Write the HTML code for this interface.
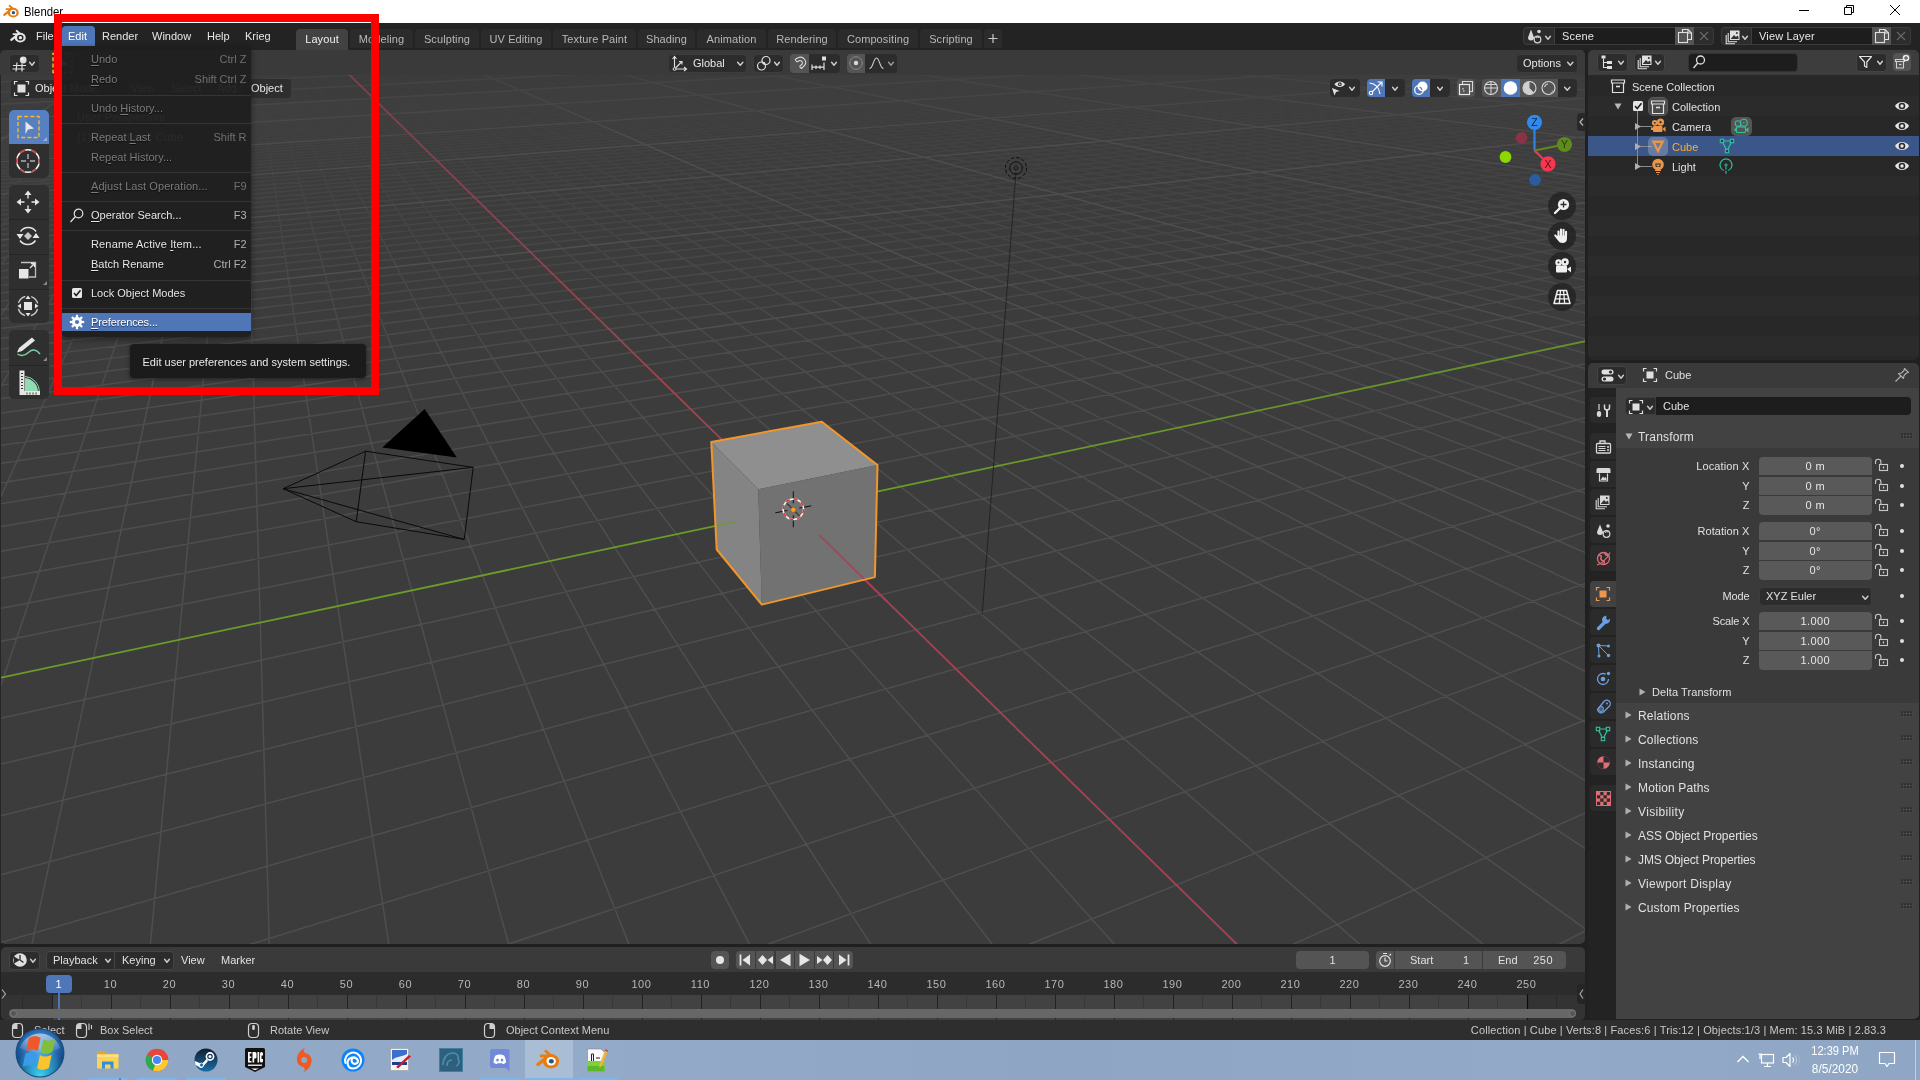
<!DOCTYPE html>
<html><head><meta charset="utf-8"><title>Blender</title>
<style>
html,body{margin:0;padding:0;width:1920px;height:1080px;overflow:hidden;background:#202020;font-family:"Liberation Sans", sans-serif;}
.a{position:absolute;box-sizing:border-box;}
.t{white-space:nowrap;overflow:visible;}
svg{overflow:visible;}
</style></head><body><div id="root" class="a" style="left:0;top:0;width:1920px;height:1080px;will-change:transform;">
<div class="a" style="left:0px;top:0px;width:1920px;height:23px;background:#ffffff;"></div>
<svg class="a" style="left:3px;top:3px;" width="17" height="17" viewBox="0 0 16 16"><g fill="none" stroke="#e87d0d" stroke-linecap="round">
<path d="M1.2 11.2L8.2 5.6" stroke-width="2.1"/>
<path d="M3.2 5.7H8.6" stroke-width="1.7"/>
<path d="M6.2 2.6L9.4 5.4" stroke-width="1.7"/>
</g>
<ellipse cx="9.6" cy="9.1" rx="5.2" ry="4.6" fill="#e87d0d"/>
<ellipse cx="9.7" cy="9.1" rx="3.0" ry="2.7" fill="#fff"/>
<ellipse cx="9.8" cy="9.1" rx="1.6" ry="1.5" fill="#265787"/></svg>
<div class="a t" style="left:23.5px;top:3.5px;height:16px;line-height:16px;font-size:12px;color:#000;transform:scaleX(.945);transform-origin:0 50%;">Blender</div>
<svg class="a" style="left:1790px;top:0px;" width="130" height="23" viewBox="0 0 130 23"><g stroke="#000" stroke-width="1" fill="none">
<path d="M9 10.5H19"/>
<path d="M54.5 7.5H61.5V14.5H54.5Z M56.5 7.5V5.5H63.5V12.5H61.5"/>
<path d="M100 5L110 15M110 5L100 15"/></g></svg>
<div class="a" style="left:0px;top:23px;width:1920px;height:27px;background:#232323;"></div>
<svg class="a" style="left:10px;top:28px;" width="17" height="17" viewBox="0 0 16 16"><g fill="none" stroke="#e6e6e6" stroke-linecap="round">
<path d="M1.2 11.2L8.2 5.6" stroke-width="2.1"/>
<path d="M3.2 5.7H8.6" stroke-width="1.7"/>
<path d="M6.2 2.6L9.4 5.4" stroke-width="1.7"/>
</g>
<ellipse cx="9.6" cy="9.1" rx="5.2" ry="4.6" fill="#e6e6e6"/>
<ellipse cx="9.7" cy="9.1" rx="3.0" ry="2.7" fill="#232323"/>
<ellipse cx="9.8" cy="9.1" rx="1.6" ry="1.5" fill="#e6e6e6"/></svg>
<div class="a t" style="left:36px;top:27px;height:18px;line-height:18px;font-size:11px;color:#e6e6e6;">File</div>
<div class="a" style="left:62px;top:26px;width:33px;height:19.5px;background:#4f77b8;border-radius:4px 4px 0 0;"></div>
<div class="a t" style="left:68px;top:27px;height:18px;line-height:18px;font-size:11px;color:#fff;">Edit</div>
<div class="a t" style="left:102px;top:27px;height:18px;line-height:18px;font-size:11px;color:#e6e6e6;">Render</div>
<div class="a t" style="left:152px;top:27px;height:18px;line-height:18px;font-size:11px;color:#e6e6e6;">Window</div>
<div class="a t" style="left:207px;top:27px;height:18px;line-height:18px;font-size:11px;color:#e6e6e6;">Help</div>
<div class="a t" style="left:245px;top:27px;height:18px;line-height:18px;font-size:11px;color:#e6e6e6;">Krieg</div>
<div class="a" style="left:296px;top:29px;width:52px;height:21px;background:#424242;border-radius:4px 4px 0 0;"></div>
<div class="a t" style="left:296px;top:30px;width:52px;height:19px;line-height:19px;font-size:11px;color:#f0f0f0;text-align:center;letter-spacing:0.1px;">Layout</div>
<div class="a" style="left:350px;top:29px;width:63px;height:19px;background:#2b2b2b;border-radius:4px 4px 0 0;"></div>
<div class="a t" style="left:350px;top:30px;width:63px;height:19px;line-height:19px;font-size:11px;color:#b8b8b8;text-align:center;letter-spacing:0.1px;">Modeling</div>
<div class="a" style="left:415px;top:29px;width:64px;height:19px;background:#2b2b2b;border-radius:4px 4px 0 0;"></div>
<div class="a t" style="left:415px;top:30px;width:64px;height:19px;line-height:19px;font-size:11px;color:#b8b8b8;text-align:center;letter-spacing:0.1px;">Sculpting</div>
<div class="a" style="left:481px;top:29px;width:70px;height:19px;background:#2b2b2b;border-radius:4px 4px 0 0;"></div>
<div class="a t" style="left:481px;top:30px;width:70px;height:19px;line-height:19px;font-size:11px;color:#b8b8b8;text-align:center;letter-spacing:0.1px;">UV Editing</div>
<div class="a" style="left:553px;top:29px;width:83px;height:19px;background:#2b2b2b;border-radius:4px 4px 0 0;"></div>
<div class="a t" style="left:553px;top:30px;width:83px;height:19px;line-height:19px;font-size:11px;color:#b8b8b8;text-align:center;letter-spacing:0.1px;">Texture Paint</div>
<div class="a" style="left:638px;top:29px;width:57px;height:19px;background:#2b2b2b;border-radius:4px 4px 0 0;"></div>
<div class="a t" style="left:638px;top:30px;width:57px;height:19px;line-height:19px;font-size:11px;color:#b8b8b8;text-align:center;letter-spacing:0.1px;">Shading</div>
<div class="a" style="left:697px;top:29px;width:69px;height:19px;background:#2b2b2b;border-radius:4px 4px 0 0;"></div>
<div class="a t" style="left:697px;top:30px;width:69px;height:19px;line-height:19px;font-size:11px;color:#b8b8b8;text-align:center;letter-spacing:0.1px;">Animation</div>
<div class="a" style="left:768px;top:29px;width:68px;height:19px;background:#2b2b2b;border-radius:4px 4px 0 0;"></div>
<div class="a t" style="left:768px;top:30px;width:68px;height:19px;line-height:19px;font-size:11px;color:#b8b8b8;text-align:center;letter-spacing:0.1px;">Rendering</div>
<div class="a" style="left:838px;top:29px;width:80px;height:19px;background:#2b2b2b;border-radius:4px 4px 0 0;"></div>
<div class="a t" style="left:838px;top:30px;width:80px;height:19px;line-height:19px;font-size:11px;color:#b8b8b8;text-align:center;letter-spacing:0.1px;">Compositing</div>
<div class="a" style="left:920px;top:29px;width:62px;height:19px;background:#2b2b2b;border-radius:4px 4px 0 0;"></div>
<div class="a t" style="left:920px;top:30px;width:62px;height:19px;line-height:19px;font-size:11px;color:#b8b8b8;text-align:center;letter-spacing:0.1px;">Scripting</div>
<div class="a" style="left:984px;top:29px;width:18px;height:19px;background:#2b2b2b;border-radius:4px 4px 0 0;"></div>
<svg class="a" style="left:984px;top:29px;" width="18" height="19" viewBox="0 0 18 19"><path d="M9 5V14M4.5 9.5H13.5" stroke="#c8c8c8" stroke-width="1.2" fill="none"/></svg>
<div class="a" style="left:1523px;top:27px;width:191px;height:18px;background:#1d1d1d;border-radius:4px;border:1px solid #3a3a3a;"></div>
<div class="a" style="left:1523px;top:27px;width:31.5px;height:18px;background:#2c2c2c;border-radius:4px 0 0 4px;border:1px solid #3d3d3d;"></div>
<div class="a" style="left:1674.5px;top:27px;width:19.5px;height:18px;background:#545454;"></div>
<div class="a" style="left:1694px;top:27px;width:20px;height:18px;background:#2c2c2c;border-radius:0 4px 4px 0;border:1px solid #3a3a3a;border-left:none;"></div>
<div class="a t" style="left:1562.0px;top:27px;height:18px;line-height:18px;font-size:11px;color:#e6e6e6;letter-spacing:0.15px;">Scene</div>
<svg class="a" style="left:1543.5px;top:34.5px;" width="8" height="5.5" viewBox="0 0 8 5.5"><path d="M1.600 1.200L4.0 4.3L6.4 1.200" fill="none" stroke="#d0d0d0" stroke-width="1.4" stroke-linecap="round" stroke-linejoin="round"/></svg>
<svg class="a" style="left:1676.5px;top:28px;" width="16" height="16" viewBox="0 0 16 16"><path d="M5.500 4.500V1.500H11L14.500 5V11.500H11" fill="none" stroke="#e0e0e0" stroke-width="1.100"/><path d="M11 1.500V5H14.500" fill="none" stroke="#e0e0e0" stroke-width="1"/><rect x="1.500" y="4.500" width="9" height="10" fill="none" stroke="#e0e0e0" stroke-width="1.100"/></svg>
<svg class="a" style="left:1696px;top:28px;" width="16" height="16" viewBox="0 0 16 16"><path d="M4 4L12 12M12 4L4 12" stroke="#6a6a6a" stroke-width="1.100"/></svg>
<svg class="a" style="left:1526px;top:28px;" width="17" height="17" viewBox="0 0 17 17"><path d="M5 1.500L8 9.500A3 3 0 1 1 2 9.500Z" fill="#d8d8d8"/><circle cx="13" cy="3.500" r="1.800" fill="#d8d8d8"/><circle cx="11.500" cy="11.500" r="3.300" fill="none" stroke="#d8d8d8" stroke-width="1.200"/><path d="M10 10A2.500 2.500 0 0 1 13 9.500" fill="none" stroke="#d8d8d8" stroke-width="1"/></svg>
<div class="a" style="left:1720.5px;top:27px;width:190.5px;height:18px;background:#1d1d1d;border-radius:4px;border:1px solid #3a3a3a;"></div>
<div class="a" style="left:1720.5px;top:27px;width:31.0px;height:18px;background:#2c2c2c;border-radius:4px 0 0 4px;border:1px solid #3d3d3d;"></div>
<div class="a" style="left:1871.5px;top:27px;width:19.5px;height:18px;background:#545454;"></div>
<div class="a" style="left:1891px;top:27px;width:20px;height:18px;background:#2c2c2c;border-radius:0 4px 4px 0;border:1px solid #3a3a3a;border-left:none;"></div>
<div class="a t" style="left:1759.0px;top:27px;height:18px;line-height:18px;font-size:11px;color:#e6e6e6;letter-spacing:0.15px;">View Layer</div>
<svg class="a" style="left:1740.5px;top:34.5px;" width="8" height="5.5" viewBox="0 0 8 5.5"><path d="M1.600 1.200L4.0 4.3L6.4 1.200" fill="none" stroke="#d0d0d0" stroke-width="1.4" stroke-linecap="round" stroke-linejoin="round"/></svg>
<svg class="a" style="left:1873.5px;top:28px;" width="16" height="16" viewBox="0 0 16 16"><path d="M5.500 4.500V1.500H11L14.500 5V11.500H11" fill="none" stroke="#e0e0e0" stroke-width="1.100"/><path d="M11 1.500V5H14.500" fill="none" stroke="#e0e0e0" stroke-width="1"/><rect x="1.500" y="4.500" width="9" height="10" fill="none" stroke="#e0e0e0" stroke-width="1.100"/></svg>
<svg class="a" style="left:1893px;top:28px;" width="16" height="16" viewBox="0 0 16 16"><path d="M4 4L12 12M12 4L4 12" stroke="#6a6a6a" stroke-width="1.100"/></svg>
<svg class="a" style="left:1724.5px;top:28.5px;" width="16" height="16" viewBox="0 0 16 16"><rect x="5" y="1.500" width="9.500" height="9.500" fill="#e0e0e0"/><path d="M6 9.500L9 6L11 8L12.500 6.500L13.500 8V10H6Z" fill="#333"/><circle cx="11.800" cy="4" r="1" fill="#333"/><path d="M3.200 4V12.800H12M1.200 6V14.800H10" fill="none" stroke="#e0e0e0" stroke-width="1.100"/></svg>
<div class="a" style="left:0px;top:50px;width:1585px;height:894px;background:#3c3c3c;border-radius:5px;overflow:hidden;"><svg class="a" style="left:0;top:0" width="1585" height="894" viewBox="0 0 1585 894"><defs><linearGradient id="gf" gradientUnits="userSpaceOnUse" x1="0" y1="0" x2="0" y2="894"><stop offset="0.028" stop-color="#4e4e4e" stop-opacity="0.05"/><stop offset="0.08" stop-color="#4e4e4e" stop-opacity="0.2"/><stop offset="0.145" stop-color="#4e4e4e" stop-opacity="0.38"/><stop offset="0.22" stop-color="#4e4e4e" stop-opacity="0.6"/><stop offset="0.36" stop-color="#4e4e4e" stop-opacity="0.86"/><stop offset="0.5" stop-color="#4e4e4e" stop-opacity="1"/></linearGradient><linearGradient id="gc" gradientUnits="userSpaceOnUse" x1="0" y1="0" x2="0" y2="894"><stop offset="0.028" stop-color="#505050" stop-opacity="0.32"/><stop offset="0.11" stop-color="#505050" stop-opacity="0.8"/><stop offset="0.22" stop-color="#4f4f4f" stop-opacity="1"/><stop offset="1" stop-color="#4e4e4e" stop-opacity="1"/></linearGradient><linearGradient id="gx" gradientUnits="userSpaceOnUse" x1="0" y1="0" x2="0" y2="894"><stop offset="0.02" stop-color="#a54251" stop-opacity="0.6"/><stop offset="0.4" stop-color="#a54251" stop-opacity="1"/></linearGradient><linearGradient id="gy" gradientUnits="userSpaceOnUse" x1="0" y1="0" x2="0" y2="894"><stop offset="0.3" stop-color="#6c9c28" stop-opacity="0.85"/><stop offset="0.5" stop-color="#6c9c28" stop-opacity="1"/></linearGradient></defs><path d="M-5.0 71.0L1346.4 -5.0M-5.0 72.8L1365.2 -5.0M-5.0 74.5L1384.1 -5.0M-5.0 76.3L1403.1 -5.0M-5.0 78.2L1422.3 -5.0M-5.0 80.0L1441.5 -5.0M-5.0 82.0L1460.9 -5.0M-5.0 83.9L1480.4 -5.0M-5.0 86.0L1500.0 -5.0M-5.0 90.2L1539.6 -5.0M-5.0 92.4L1559.6 -5.0M-5.0 94.6L1579.7 -5.0M-5.0 96.9L1590.0 -4.4M-5.0 99.3L1590.0 -3.1M-5.0 101.7L1590.0 -1.7M-5.0 104.3L1590.0 -0.3M-5.0 106.8L1590.0 1.1M-5.0 109.5L1590.0 2.6M-5.0 115.0L1590.0 5.6M-5.0 117.9L1590.0 7.2M-5.0 120.9L1590.0 8.9M-5.0 124.0L1590.0 10.6M-5.0 127.2L1590.0 12.4M-5.0 130.4L1590.0 14.2M-5.0 133.8L1590.0 16.0M-5.0 137.3L1590.0 18.0M-5.0 140.9L1590.0 20.0M-5.0 148.5L1590.0 24.2M-5.0 152.5L1590.0 26.4M-5.0 156.7L1590.0 28.7M-5.0 161.0L1590.0 31.1M-5.0 165.4L1590.0 33.6M-5.0 170.1L1590.0 36.1M-5.0 174.9L1590.0 38.8M-5.0 179.9L1590.0 41.6M-5.0 185.1L1590.0 44.4M-5.0 196.2L1590.0 50.6M5.5 16.0L-5.0 20.3M-5.0 202.1L1590.0 53.8M17.6 15.5L-5.0 25.2M-5.0 208.3L1590.0 57.3M29.7 15.0L-5.0 30.7M-5.0 214.7L1590.0 60.8M41.7 14.6L-5.0 36.7M-5.0 221.4L1590.0 64.6M53.6 14.1L-5.0 43.5M-5.0 228.5L1590.0 68.5M65.4 13.6L-5.0 51.2M-5.0 235.9L1590.0 72.6M77.1 13.1L-5.0 59.8M-5.0 243.6L1590.0 76.8M88.8 12.6L-5.0 69.8M-5.0 251.8L1590.0 81.4M100.4 12.1L-5.0 81.3M-5.0 269.4L1590.0 91.1M123.3 11.2L-5.0 110.7M-5.0 279.0L1590.0 96.4M134.7 10.7L-5.0 129.9M-5.0 289.0L1590.0 102.0M145.9 10.3L-5.0 153.5M-5.0 299.7L1590.0 107.9M157.2 9.8L-5.0 183.1M-5.0 311.0L1590.0 114.2M168.3 9.4L-5.0 221.5M-5.0 323.0L1590.0 120.8M179.4 8.9L-5.0 273.3M-5.0 335.8L1590.0 127.9M190.3 8.5L-5.0 346.7M-5.0 349.4L1590.0 135.4M201.3 8.0L-5.0 459.2M-5.0 364.0L1590.0 143.5M212.1 7.6L-5.0 652.9M-5.0 396.3L1590.0 161.4M233.6 6.7L150.0 899.0M-5.0 414.3L1590.0 171.3M244.2 6.2L269.5 899.0M-5.0 433.7L1590.0 182.1M254.8 5.8L389.5 899.0M-5.0 454.7L1590.0 193.7M265.3 5.4L509.9 899.0M-5.0 477.5L1590.0 206.3M275.8 5.0L630.8 899.0M-5.0 502.4L1590.0 220.1M286.1 4.5L752.1 899.0M-5.0 529.5L1590.0 235.1M296.5 4.1L873.8 899.0M-5.0 559.4L1590.0 251.7M306.7 3.7L996.0 899.0M-5.0 592.4L1590.0 269.9M316.9 3.3L1118.6 899.0M-5.0 669.7L1590.0 312.7M337.1 2.4L1365.3 899.0M-5.0 715.5L1590.0 338.1M347.1 2.0L1489.3 899.0M-5.0 767.3L1590.0 366.8M357.0 1.6L1590.0 882.1M-5.0 826.3L1590.0 399.4M366.9 1.2L1590.0 801.7M-5.0 894.2L1590.0 437.0M376.7 0.8L1590.0 733.5M235.1 899.0L1590.0 480.7M386.4 0.4L1590.0 674.9M493.9 899.0L1590.0 532.1M396.1 0.0L1590.0 624.0M754.8 899.0L1590.0 593.5M405.7 -0.4L1590.0 579.3M1017.7 899.0L1590.0 668.1M415.3 -0.8L1590.0 539.9M1549.9 899.0L1590.0 878.6M434.3 -1.5L1590.0 473.3M443.7 -1.9L1590.0 444.9M453.0 -2.3L1590.0 419.2M462.3 -2.7L1590.0 395.8M471.6 -3.1L1590.0 374.5M480.7 -3.4L1590.0 354.8M489.9 -3.8L1590.0 336.8M498.9 -4.2L1590.0 320.1M508.0 -4.6L1590.0 304.7M527.0 -5.0L1590.0 276.9M537.3 -5.0L1590.0 264.4M547.6 -5.0L1590.0 252.8M558.0 -5.0L1590.0 241.8M568.5 -5.0L1590.0 231.5M579.0 -5.0L1590.0 221.8M589.5 -5.0L1590.0 212.6M600.1 -5.0L1590.0 204.0M610.7 -5.0L1590.0 195.8M632.0 -5.0L1590.0 180.7M642.7 -5.0L1590.0 173.7M653.5 -5.0L1590.0 167.0M664.3 -5.0L1590.0 160.7M675.2 -5.0L1590.0 154.7M686.1 -5.0L1590.0 148.9M697.0 -5.0L1590.0 143.4M708.0 -5.0L1590.0 138.1M719.0 -5.0L1590.0 133.0M741.2 -5.0L1590.0 123.5M752.4 -5.0L1590.0 119.1M763.6 -5.0L1590.0 114.8M774.8 -5.0L1590.0 110.7M786.1 -5.0L1590.0 106.7M797.5 -5.0L1590.0 102.9M808.8 -5.0L1590.0 99.2M820.3 -5.0L1590.0 95.6M831.7 -5.0L1590.0 92.2M854.8 -5.0L1590.0 85.7M866.5 -5.0L1590.0 82.6M878.1 -5.0L1590.0 79.6M889.8 -5.0L1590.0 76.7M901.6 -5.0L1590.0 73.9M913.4 -5.0L1590.0 71.2M925.3 -5.0L1590.0 68.6M937.2 -5.0L1590.0 66.0M949.1 -5.0L1590.0 63.5M973.2 -5.0L1590.0 58.8M985.3 -5.0L1590.0 56.5M997.5 -5.0L1590.0 54.3M1009.7 -5.0L1590.0 52.2M1021.9 -5.0L1590.0 50.1M1034.3 -5.0L1590.0 48.0M1046.6 -5.0L1590.0 46.1M1059.0 -5.0L1590.0 44.1M1071.5 -5.0L1590.0 42.3" stroke="url(#gf)" stroke-width="1.450" fill="none"/><path d="M-5.0 16.5L518.6 -5.0M-5.0 23.7L663.0 -5.0M-5.0 32.3L815.4 -5.0M-5.0 42.3L976.5 -5.0M-5.0 54.5L1147.0 -5.0M-5.0 69.4L1327.7 -5.0M-5.0 88.1L1519.7 -5.0M-5.0 112.2L1590.0 4.1M-5.0 144.7L1590.0 22.1M-5.0 190.5L1590.0 47.5M-5.0 260.4L1590.0 86.1M111.9 11.7L-5.0 94.7M-5.0 379.6L1590.0 152.1M222.9 7.1L30.9 899.0M1282.8 899.0L1590.0 760.7M424.8 -1.2L1590.0 504.7M516.9 -4.9L1590.0 290.3M621.3 -5.0L1590.0 188.0M730.1 -5.0L1590.0 128.2M843.3 -5.0L1590.0 88.9M961.2 -5.0L1590.0 61.1M1084.0 -5.0L1590.0 40.4M1212.2 -5.0L1590.0 24.4M1346.0 -5.0L1590.0 11.7M1485.9 -5.0L1590.0 1.3" stroke="url(#gc)" stroke-width="1.450" fill="none"/><path d="M319.0 -5.0L1241.7 899.0" stroke="url(#gx)" stroke-width="1.800"/><path d="M-5.0 628.9L1590.0 290.2" stroke="url(#gy)" stroke-width="1.800"/><path d="M711.3 391.9L821.8 371.7L877.5 415.1L758.3 439.3Z" fill="#8f8f90"/><path d="M711.3 391.9L758.3 439.3L761.8 554.6L716.7 499.5Z" fill="#848484"/><path d="M758.3 439.3L877.5 415.1L874.9 527.1L761.8 554.6Z" fill="#727272"/><path d="M715.5 475.9L736.0 471.5" stroke="#6c9c28" stroke-width="1.600" stroke-opacity=".7"/><path d="M819.4 485.2L887.2 551.6" stroke="#a54251" stroke-width="1.800" stroke-opacity=".85"/><path d="M711.3 391.9L821.8 371.7L877.5 415.1L874.9 527.1L761.8 554.6L716.7 499.5Z" fill="none" stroke="#f0962b" stroke-width="2" stroke-linejoin="round"/></svg></div>
<div class="a" style="left:0px;top:50px;width:1px;height:894px;background:#262626;"></div>
<div class="a t" style="left:77px;top:108px;height:19px;line-height:19px;font-size:11px;color:#e6e6e6;letter-spacing:0.3px;">User Perspective</div>
<div class="a t" style="left:77px;top:128px;height:19px;line-height:19px;font-size:11px;color:#e6e6e6;letter-spacing:0.3px;">(1) Collection | Cube</div>
<div class="a" style="left:0px;top:50px;width:1585px;height:24.5px;background:#3a3a3a;border-radius:5px 5px 0 0;"></div>
<div class="a" style="left:8.5px;top:53.5px;width:31px;height:19.5px;background:#2c2c2c;border-radius:4px;border:1px solid #3d3d3d;"></div>
<svg class="a" style="left:9px;top:54px;" width="31" height="19" viewBox="0 0 31 19"><path d="M4 11.500H17M3.500 15H15.500M8 8.500L7 17.500M13 9.500V17.500" stroke="#e0e0e0" stroke-width="1.200" fill="none"/><circle cx="14.200" cy="6" r="3.400" fill="#dcdcdc"/><circle cx="13.200" cy="5" r="1.100" fill="#fff"/></svg>
<svg class="a" style="left:28px;top:61px;" width="8" height="5.5" viewBox="0 0 8 5.5"><path d="M1.600 1.200L4.0 4.3L6.4 1.200" fill="none" stroke="#d0d0d0" stroke-width="1.4" stroke-linecap="round" stroke-linejoin="round"/></svg>
<svg class="a" style="left:52px;top:52px;" width="22" height="22" viewBox="0 0 22 22"><rect x="1" y="1.500" width="19" height="19" fill="none" stroke="#ffb726" stroke-width="1.400" stroke-dasharray="4 2.2"/><path d="M8 6L16 12.500L10.500 13.500L8 18Z" fill="#e0e0e0"/></svg>
<div class="a" style="left:9.5px;top:78.5px;width:119px;height:20px;background:#2c2c2c;border-radius:4px;border:1px solid #3d3d3d;"></div>
<svg class="a" style="left:13px;top:80px;" width="18" height="17" viewBox="0 0 18 17"><rect x="4.500" y="4.500" width="8" height="8" fill="#e0e0e0"/><path d="M1.500 4.500V1.500H4.500M12.500 1.500H15.500V4.500M15.500 12.500V15.500H12.500M4.500 15.500H1.500V12.500" fill="none" stroke="#e0e0e0" stroke-width="1.200"/></svg>
<div class="a t" style="left:35px;top:79px;height:19px;line-height:19px;font-size:11px;color:#e6e6e6;">Object Mode</div>
<div class="a t" style="left:131px;top:79px;height:19px;line-height:19px;font-size:11px;color:#e6e6e6;">View</div>
<div class="a t" style="left:171px;top:79px;height:19px;line-height:19px;font-size:11px;color:#e6e6e6;">Select</div>
<div class="a t" style="left:217px;top:79px;height:19px;line-height:19px;font-size:11px;color:#e6e6e6;">Add</div>
<div class="a" style="left:245px;top:79px;width:46px;height:19px;background:rgba(44,44,44,.9);border-radius:4px;"></div>
<div class="a t" style="left:251px;top:79px;height:19px;line-height:19px;font-size:11px;color:#e6e6e6;">Object</div>
<div class="a" style="left:667.5px;top:53.5px;width:79px;height:19px;background:#2c2c2c;border-radius:4px;border:1px solid #3d3d3d;"></div>
<svg class="a" style="left:670px;top:54px;" width="18" height="18" viewBox="0 0 18 18"><path d="M4.500 15V3M2.500 5L4.500 2.500L6.500 5M4.500 15H16M14 13L16.500 15L14 17M5.500 14L11.500 8M9 7.500H12V10.500" fill="none" stroke="#e0e0e0" stroke-width="1.100"/><circle cx="4.500" cy="15" r="1.400" fill="#2c2c2c" stroke="#e0e0e0" stroke-width="1"/></svg>
<div class="a t" style="left:693px;top:53.5px;height:19px;line-height:19px;font-size:11px;color:#e6e6e6;">Global</div>
<svg class="a" style="left:736px;top:61px;" width="8.5" height="5.5" viewBox="0 0 8.5 5.5"><path d="M1.600 1.200L4.25 4.3L6.9 1.200" fill="none" stroke="#d0d0d0" stroke-width="1.4" stroke-linecap="round" stroke-linejoin="round"/></svg>
<div class="a" style="left:752.5px;top:53.5px;width:31px;height:19px;background:#2c2c2c;border-radius:4px;border:1px solid #3d3d3d;"></div>
<svg class="a" style="left:755px;top:54px;" width="18" height="18" viewBox="0 0 18 18"><circle cx="6.500" cy="12" r="4" fill="none" stroke="#e0e0e0" stroke-width="1.200"/><circle cx="11" cy="6.500" r="4" fill="none" stroke="#e0e0e0" stroke-width="1.200"/><circle cx="9" cy="9.200" r="1.300" fill="#e0e0e0"/></svg>
<svg class="a" style="left:773px;top:61px;" width="8" height="5.5" viewBox="0 0 8 5.5"><path d="M1.600 1.200L4.0 4.3L6.4 1.200" fill="none" stroke="#d0d0d0" stroke-width="1.4" stroke-linecap="round" stroke-linejoin="round"/></svg>
<div class="a" style="left:790px;top:53.5px;width:18.5px;height:19px;background:#545454;border-radius:4px 0 0 4px;"></div>
<div class="a" style="left:808.5px;top:53.5px;width:31.5px;height:19px;background:#2c2c2c;border-radius:0 4px 4px 0;"></div>
<svg class="a" style="left:790px;top:54px;" width="18" height="18" viewBox="0 0 18 18"><path d="M5 5.500L8.500 3.500A5.200 5.200 0 0 1 14.500 11.500L11.500 14.500M7 8L9.500 6.500A2.600 2.600 0 0 1 12.300 10L9.500 12.500M5 5.500L7 8M11.500 14.500L9.500 12.500" fill="none" stroke="#d8d8d8" stroke-width="1.100"/></svg>
<svg class="a" style="left:810px;top:54px;" width="18" height="18" viewBox="0 0 18 18"><path d="M2 10.500V16M6 11.500V15M10 11.500V15M14 8.500V16M2 13.200H14" stroke="#e0e0e0" stroke-width="1.200" fill="none"/><rect x="12" y="2.500" width="4" height="4" fill="#e0e0e0"/></svg>
<svg class="a" style="left:830px;top:61px;" width="8" height="5.5" viewBox="0 0 8 5.5"><path d="M1.600 1.200L4.0 4.3L6.4 1.200" fill="none" stroke="#d0d0d0" stroke-width="1.4" stroke-linecap="round" stroke-linejoin="round"/></svg>
<div class="a" style="left:847px;top:53.5px;width:18px;height:19px;background:#545454;border-radius:4px 0 0 4px;"></div>
<div class="a" style="left:865px;top:53.5px;width:32px;height:19px;background:#2c2c2c;border-radius:0 4px 4px 0;"></div>
<svg class="a" style="left:847px;top:54px;" width="18" height="18" viewBox="0 0 18 18"><circle cx="9" cy="9" r="6.300" fill="none" stroke="#8a8a8a" stroke-width="1"/><circle cx="9" cy="9" r="2.200" fill="#d8d8d8"/></svg>
<svg class="a" style="left:867px;top:54px;" width="18" height="18" viewBox="0 0 18 18"><path d="M2.500 14.500C6 14.500 6.500 4 9.500 4S13 14.500 16.500 14.500" fill="none" stroke="#c8c8c8" stroke-width="1.100"/></svg>
<svg class="a" style="left:887px;top:61px;" width="8" height="5.5" viewBox="0 0 8 5.5"><path d="M1.600 1.200L4.0 4.3L6.4 1.200" fill="none" stroke="#9a9a9a" stroke-width="1.4" stroke-linecap="round" stroke-linejoin="round"/></svg>
<div class="a" style="left:1516px;top:53.5px;width:61.5px;height:19px;background:#2c2c2c;border-radius:4px;border:1px solid #3d3d3d;"></div>
<div class="a t" style="left:1523px;top:53.5px;height:19px;line-height:19px;font-size:11px;color:#e6e6e6;">Options</div>
<svg class="a" style="left:1566px;top:61px;" width="8.5" height="5.5" viewBox="0 0 8.5 5.5"><path d="M1.600 1.200L4.25 4.3L6.9 1.200" fill="none" stroke="#d0d0d0" stroke-width="1.4" stroke-linecap="round" stroke-linejoin="round"/></svg>
<div class="a" style="left:1330px;top:79px;width:30px;height:18px;background:#2c2c2c;border-radius:4px;"></div>
<svg class="a" style="left:1330px;top:79px;" width="30" height="18" viewBox="0 0 30 18"><path d="M4.500 5.200C7 1.500 12.500 1.500 15 5.200C12.500 8.900 7 8.900 4.500 5.200Z" fill="#e0e0e0"/><circle cx="9.800" cy="5.200" r="1.900" fill="#2c2c2c"/><circle cx="9.800" cy="5.200" r=".800" fill="#e0e0e0"/><path d="M2 9L9.500 12L6 13L4.500 16.500Z" fill="#e0e0e0"/></svg>
<svg class="a" style="left:1348px;top:86px;" width="8" height="5.5" viewBox="0 0 8 5.5"><path d="M1.600 1.200L4.0 4.3L6.4 1.200" fill="none" stroke="#d0d0d0" stroke-width="1.4" stroke-linecap="round" stroke-linejoin="round"/></svg>
<div class="a" style="left:1367px;top:79px;width:18px;height:18px;background:#4f77b8;border-radius:4px 0 0 4px;"></div>
<div class="a" style="left:1385px;top:79px;width:20px;height:18px;background:#2c2c2c;border-radius:0 4px 4px 0;"></div>
<svg class="a" style="left:1367px;top:79px;" width="18" height="18" viewBox="0 0 18 18"><path d="M2.500 4C8 4.500 12 8.500 13 15M5 13L14.500 3.500M10.500 3H15V7.500" fill="none" stroke="#fff" stroke-width="1.100"/><circle cx="4" cy="14" r="1.700" fill="#4f77b8" stroke="#fff" stroke-width="1.100"/></svg>
<svg class="a" style="left:1391px;top:86px;" width="8" height="5.5" viewBox="0 0 8 5.5"><path d="M1.600 1.200L4.0 4.3L6.4 1.200" fill="none" stroke="#d0d0d0" stroke-width="1.4" stroke-linecap="round" stroke-linejoin="round"/></svg>
<div class="a" style="left:1412px;top:79px;width:18px;height:18px;background:#4f77b8;border-radius:4px 0 0 4px;"></div>
<div class="a" style="left:1430px;top:79px;width:20px;height:18px;background:#2c2c2c;border-radius:0 4px 4px 0;"></div>
<svg class="a" style="left:1412px;top:79px;" width="18" height="18" viewBox="0 0 18 18"><circle cx="10.500" cy="7.500" r="5" fill="#fff"/><circle cx="7" cy="11" r="4.300" fill="none" stroke="#fff" stroke-width="1.200"/><path d="M7.500 8A3.500 3.500 0 0 1 10 11" fill="none" stroke="#4f77b8" stroke-width="1.200"/></svg>
<svg class="a" style="left:1436px;top:86px;" width="8" height="5.5" viewBox="0 0 8 5.5"><path d="M1.600 1.200L4.0 4.3L6.4 1.200" fill="none" stroke="#d0d0d0" stroke-width="1.4" stroke-linecap="round" stroke-linejoin="round"/></svg>
<div class="a" style="left:1457px;top:79px;width:18px;height:18px;background:#545454;border-radius:4px;"></div>
<svg class="a" style="left:1457px;top:79px;" width="18" height="18" viewBox="0 0 18 18"><path d="M5.500 5.500V2.500H15.500V12.500H12.500" fill="none" stroke="#d8d8d8" stroke-width="1.100"/><rect x="2.500" y="5.500" width="10" height="10" fill="none" stroke="#e8e8e8" stroke-width="1.200"/><path d="M6 9V12H9" fill="none" stroke="#e8e8e8" stroke-width="1.100" stroke-dasharray="1.500 1.500"/></svg>
<div class="a" style="left:1482px;top:79px;width:18.5px;height:18px;background:#545454;border-radius:4px 0 0 4px;"></div>
<div class="a" style="left:1501px;top:79px;width:18.5px;height:18px;background:#4f77b8;"></div>
<div class="a" style="left:1520px;top:79px;width:18.5px;height:18px;background:#545454;"></div>
<div class="a" style="left:1539px;top:79px;width:18.5px;height:18px;background:#545454;"></div>
<div class="a" style="left:1557.5px;top:79px;width:19.5px;height:18px;background:#2c2c2c;border-radius:0 4px 4px 0;"></div>
<svg class="a" style="left:1482px;top:79px;" width="18" height="18" viewBox="0 0 18 18"><circle cx="9" cy="9" r="6.500" fill="none" stroke="#d8d8d8" stroke-width="1.100"/><path d="M2.500 9H15.500M9 2.500V15.500M3.500 5.500H14.500" stroke="#d8d8d8" stroke-width="1" fill="none"/></svg>
<svg class="a" style="left:1501px;top:79px;" width="18" height="18" viewBox="0 0 18 18"><circle cx="9.500" cy="9" r="6.800" fill="#fff"/></svg>
<svg class="a" style="left:1520px;top:79px;" width="18" height="18" viewBox="0 0 18 18"><circle cx="9.500" cy="9" r="6.500" fill="none" stroke="#d8d8d8" stroke-width="1.100"/><path d="M9.500 9V2.500A6.500 6.500 0 0 0 3 9Z M9.500 9L14 13.500A6.500 6.500 0 0 1 3 9Z" fill="#cfcfcf"/></svg>
<svg class="a" style="left:1539px;top:79px;" width="18" height="18" viewBox="0 0 18 18"><circle cx="9.500" cy="9" r="6.500" fill="none" stroke="#d8d8d8" stroke-width="1.100"/><path d="M5.500 8A4.500 4.500 0 0 1 9 4.800" fill="none" stroke="#d8d8d8" stroke-width="1.100"/><path d="M12 14L14.500 11" stroke="#aaa" stroke-width="1.500" stroke-dasharray="1 1"/></svg>
<svg class="a" style="left:1563px;top:86px;" width="8.5" height="5.5" viewBox="0 0 8.5 5.5"><path d="M1.600 1.200L4.25 4.3L6.9 1.200" fill="none" stroke="#d0d0d0" stroke-width="1.4" stroke-linecap="round" stroke-linejoin="round"/></svg>
<div class="a" style="left:9px;top:110px;width:40px;height:68px;background:rgba(46,46,46,.95);border-radius:5px;"></div>
<div class="a" style="left:9px;top:185px;width:40px;height:138px;background:rgba(46,46,46,.95);border-radius:5px;"></div>
<div class="a" style="left:9px;top:330px;width:40px;height:69px;background:rgba(46,46,46,.95);border-radius:5px;"></div>
<div class="a" style="left:9px;top:110px;width:40px;height:34px;background:#5680c2;border-radius:5px 5px 0 0;"></div>
<div class="a" style="left:9px;top:218.5px;width:40px;height:1px;background:rgba(30,30,30,.6);"></div>
<div class="a" style="left:9px;top:253.5px;width:40px;height:1px;background:rgba(30,30,30,.6);"></div>
<div class="a" style="left:9px;top:288.5px;width:40px;height:1px;background:rgba(30,30,30,.6);"></div>
<div class="a" style="left:9px;top:364.5px;width:40px;height:1px;background:rgba(30,30,30,.6);"></div>
<svg class="a" style="left:9px;top:110px;" width="40" height="34" viewBox="0 0 40 34"><rect x="9" y="6.5" width="21" height="21" fill="none" stroke="#ffb726" stroke-width="1.4" stroke-dasharray="4 2.2"/><path d="M16.5 11.5L25 18.5L19 19.5L16.5 24Z" fill="#e6e6e6"/><path d="M34 31L38 27V31Z" fill="#9ab3dc"/></svg>
<svg class="a" style="left:9px;top:144px;" width="40" height="34" viewBox="0 0 40 34"><circle cx="19" cy="17" r="11.3" fill="none" stroke="#f2f2f2" stroke-width="1.5"/><circle cx="19" cy="17" r="11.3" fill="none" stroke="#c23b3b" stroke-width="1.5" stroke-dasharray="5.9 5.93" stroke-dashoffset="3"/><path d="M19 10V15M19 19V24M12 17H17M21 17H26" stroke="#b0b0b0" stroke-width="1.4"/></svg>
<svg class="a" style="left:9px;top:185px;" width="40" height="34" viewBox="0 0 40 34"><g fill="#e6e6e6"><path d="M19 5.5L22.5 10H15.5Z M19 28.5L22.5 24H15.5Z M7.5 17L12 13.5V20.5Z M30.5 17L26 13.5V20.5Z"/></g><path d="M19 10V13.5M19 20.5V24M12 17H15.5M22.5 17H26" stroke="#e6e6e6" stroke-width="1.4"/></svg>
<svg class="a" style="left:9px;top:219px;" width="40" height="34" viewBox="0 0 40 34"><path d="M11.5 12.5A9.5 9.5 0 0 1 27 12.5M26.5 21.5A9.5 9.5 0 0 1 11 21.5" fill="none" stroke="#e6e6e6" stroke-width="1.4"/><path d="M7.5 15H14.5L11 20Z M23.5 19H30.5L27 14Z" fill="#e6e6e6"/><path d="M19 13L23 17L19 21L15 17Z" fill="#c8c8c8"/></svg>
<svg class="a" style="left:9px;top:254px;" width="40" height="34" viewBox="0 0 40 34"><path d="M12 8.5H26.5V23H20" fill="none" stroke="#c0c0c0" stroke-width="1.3"/><rect x="10" y="15" width="9.5" height="9.5" fill="#e6e6e6"/><path d="M21 14L25 10M22 9.5H25.5V13" fill="none" stroke="#e6e6e6" stroke-width="1.3"/><path d="M34 31L38 27V31Z" fill="#888"/></svg>
<svg class="a" style="left:9px;top:289px;" width="40" height="34" viewBox="0 0 40 34"><circle cx="19" cy="17" r="10" fill="none" stroke="#d0d0d0" stroke-width="1.3" stroke-dasharray="9.7 6"  stroke-dashoffset="-3"/><rect x="15" y="13" width="8" height="8" fill="#e6e6e6"/><path d="M19 6.5L21.5 10H16.5Z M19 27.5L21.5 24H16.5Z M8.5 17L12 14.5V19.5Z M29.5 17L26 14.5V19.5Z" fill="#e6e6e6"/></svg>
<svg class="a" style="left:9px;top:330px;" width="40" height="34" viewBox="0 0 40 34"><path d="M8 22.5L10 18L23 7.5L26 10.5L13 21Z" fill="#e6e6e6"/><path d="M8.5 24C13 27 17 25 20 22S27 19 31 24" fill="none" stroke="#7fd1a3" stroke-width="1.4"/><path d="M34 31L38 27V31Z" fill="#888"/></svg>
<svg class="a" style="left:9px;top:365px;" width="40" height="34" viewBox="0 0 40 34"><path d="M16 27V13A14 14 0 0 1 29 27Z" fill="#8fdcb1"/><path d="M16 11.5A15.5 15.5 0 0 1 30.5 27" fill="none" stroke="#8fdcb1" stroke-width="1"/><path d="M10.5 5.5H15.5V26H31V30H10.5Z" fill="#e6e6e6"/><path d="M12 8.5H14M12 11.5H14M12 14.5H14M12 17.5H14M12 20.5H14M12 23.5H14M18 27.5V29.5M21 27.5V29.5M24 27.5V29.5M27 27.5V29.5" stroke="#333" stroke-width="1"/></svg>
<svg class="a" style="left:0px;top:0px;" width="1920" height="300" viewBox="0 0 1920 300"><path d="M1534.5 150.5L1534.5 123" stroke="#2f83e3" stroke-width="2.2"/><path d="M1534.5 150.5L1564.5 144.5" stroke="#5f8a1c" stroke-width="2.2"/><path d="M1534.5 150.5L1548 163.5" stroke="#f5364f" stroke-width="2.2"/><circle cx="1521.5" cy="137.8" r="5.9" fill="#8a3346"/><circle cx="1535" cy="179.8" r="5.9" fill="#2b5d9e"/><circle cx="1505.5" cy="157" r="5.9" fill="#8ad900"/><circle cx="1564.5" cy="144.5" r="7.6" fill="#5f8a1c"/><circle cx="1534.5" cy="122.3" r="7.6" fill="#2f8af0"/><circle cx="1548" cy="163.8" r="7.6" fill="#f7364f"/></svg>
<div class="a t" style="left:1527px;top:116px;width:15px;height:13px;line-height:13px;font-size:10.5px;color:#0b2447;text-align:center;">Z</div>
<div class="a t" style="left:1557px;top:138px;width:15px;height:13px;line-height:13px;font-size:10.5px;color:#2a3d08;text-align:center;">Y</div>
<div class="a t" style="left:1540.5px;top:157.5px;width:15px;height:13px;line-height:13px;font-size:10.5px;color:#5a0f1a;text-align:center;">X</div>
<div class="a" style="left:1548px;top:191.5px;width:28px;height:28px;background:rgba(30,30,30,.72);border-radius:14px;"></div>
<div class="a" style="left:1548px;top:221.5px;width:28px;height:28px;background:rgba(30,30,30,.72);border-radius:14px;"></div>
<div class="a" style="left:1548px;top:252px;width:28px;height:28px;background:rgba(30,30,30,.72);border-radius:14px;"></div>
<div class="a" style="left:1548px;top:283px;width:28px;height:28px;background:rgba(30,30,30,.72);border-radius:14px;"></div>
<svg class="a" style="left:1548px;top:191.5px;" width="28" height="28" viewBox="0 0 28 28"><circle cx="15.5" cy="12.5" r="5.6" fill="#f0f0f0"/><path d="M11.5 16.5L7 21" stroke="#f0f0f0" stroke-width="2.4" stroke-linecap="round"/><path d="M15.5 9.5V15.5M12.5 12.5H18.5" stroke="#2a2a2a" stroke-width="1.3"/></svg>
<svg class="a" style="left:1548px;top:221.5px;" width="28" height="28" viewBox="0 0 28 28"><g fill="none" stroke="#f0f0f0" stroke-width="2.100" stroke-linecap="round"><path d="M10.500 14.500V9.500"/><path d="M13 13.500V7.500"/><path d="M15.500 13.500V7.800"/><path d="M18 14V9.800"/></g><path d="M9.500 13.500H19V16.500C19 19.500 17 21 14.500 21C12.500 21 11 20.200 10 18.500L6.300 13.800C5.800 12.800 7 12 8 12.800L9.500 14.500Z" fill="#f0f0f0"/></svg>
<svg class="a" style="left:1548px;top:252px;" width="28" height="28" viewBox="0 0 28 28"><circle cx="10.5" cy="10.5" r="3.2" fill="#f0f0f0"/><circle cx="17" cy="10" r="3.8" fill="#f0f0f0"/><rect x="8" y="13.500" width="11" height="7" rx="1" fill="#f0f0f0"/><path d="M19 17L23 14.500V20.500Z" fill="#f0f0f0"/><circle cx="10.5" cy="10.5" r="1" fill="#2a2a2a"/><circle cx="17" cy="10" r="1.200" fill="#2a2a2a"/></svg>
<svg class="a" style="left:1548px;top:283px;" width="28" height="28" viewBox="0 0 28 28"><path d="M9.500 7.500H18.500L22 20.500H6Z" fill="none" stroke="#f0f0f0" stroke-width="1.500" stroke-linejoin="round"/><path d="M12.500 7.500L11.300 20.500M15.500 7.500L16.700 20.500M8.600 11.700H19.500M7.400 15.800H20.700" stroke="#f0f0f0" stroke-width="1.300"/></svg>
<div class="a" style="left:1577px;top:113px;width:9px;height:18px;background:rgba(38,38,38,.9);border-radius:4px 0 0 4px;"></div>
<svg class="a" style="left:1577px;top:113px;" width="9" height="18" viewBox="0 0 9 18"><path d="M6 5.5L3 9L6 12.5" fill="none" stroke="#b8b8b8" stroke-width="1.2"/></svg>
<svg class="a" style="left:0px;top:0px;" width="1920" height="1080" viewBox="0 0 1920 1080"><path d="M283.1 488.7L365.6 451.2M283.1 488.7L473.2 467.4M283.1 488.7L464.2 539.4M283.1 488.7L356.2 521.7M365.6 451.2L473.2 467.4L464.2 539.4L356.2 521.7Z" fill="none" stroke="#0a0a0a" stroke-width="1"/><path d="M424.7 409.1L382.3 447.6L456.8 457.6Z" fill="#000"/><path d="M1016 172L982.200 614.500" stroke="#1c1c1c" stroke-width="1" stroke-opacity=".75"/><circle cx="1016" cy="168" r="6.300" fill="none" stroke="#0c0c0c" stroke-width="1"/><circle cx="1016" cy="168" r="10.500" fill="none" stroke="#0c0c0c" stroke-width="1" stroke-dasharray="3.300 2.200"/><path d="M1016 165.700L1018.300 168L1016 170.300L1013.700 168Z" fill="none" stroke="#0c0c0c" stroke-width="1"/><path d="M793.3 491.3V503.3M793.3 515.3V527.3M775.3 512.8L787.3 510.5M799.3 508.1L811.3 505.8M786.8 503.3L800.3 516.8" stroke="#101010" stroke-width="1"/><circle cx="793.3" cy="509.3" r="10.200" fill="none" stroke="#f4f4f4" stroke-width="1.500"/><circle cx="793.3" cy="509.3" r="10.200" fill="none" stroke="#e03030" stroke-width="1.500" stroke-dasharray="4.005 4.005"/><circle cx="793.3" cy="509.8" r="2.600" fill="#ff9d1e" stroke="#7a4a10" stroke-width=".5"/></svg>
<div class="a" style="left:1588px;top:50px;width:330.5px;height:310px;background:#282828;border-radius:5px;overflow:hidden;"><div class="a" style="left:0px;top:0px;width:330.5px;height:25px;background:#3d3d3d;"></div><div class="a" style="left:0px;top:46px;width:330.5px;height:20px;background:#2b2b2b;"></div><div class="a" style="left:0px;top:86px;width:330.5px;height:20px;background:#2b2b2b;"></div><div class="a" style="left:0px;top:126px;width:330.5px;height:20px;background:#2b2b2b;"></div><div class="a" style="left:0px;top:166px;width:330.5px;height:20px;background:#2b2b2b;"></div><div class="a" style="left:0px;top:206px;width:330.5px;height:20px;background:#2b2b2b;"></div><div class="a" style="left:0px;top:246px;width:330.5px;height:20px;background:#2b2b2b;"></div><div class="a" style="left:0px;top:286px;width:330.5px;height:20px;background:#2b2b2b;"></div><div class="a" style="left:0px;top:86px;width:330.5px;height:20px;background:#3b5689;"></div></div>
<div class="a" style="left:1596.5px;top:52.5px;width:31px;height:19px;background:#2c2c2c;border-radius:4px;border:1px solid #444;"></div>
<svg class="a" style="left:1599px;top:53px;" width="18" height="18" viewBox="0 0 18 18"><path d="M2.500 2.500H6.500V5.500H2.500Z M8 8H13V11H8Z M8 13H13V16H8Z" fill="#e0e0e0"/><path d="M4.500 5.500V14.500H8M4.500 9.500H8" fill="none" stroke="#e0e0e0" stroke-width="1.100"/></svg>
<svg class="a" style="left:1617px;top:60px;" width="8" height="5.5" viewBox="0 0 8 5.5"><path d="M1.600 1.200L4.0 4.3L6.4 1.200" fill="none" stroke="#d0d0d0" stroke-width="1.4" stroke-linecap="round" stroke-linejoin="round"/></svg>
<div class="a" style="left:1633.5px;top:52.5px;width:31px;height:19px;background:#2c2c2c;border-radius:4px;border:1px solid #444;"></div>
<svg class="a" style="left:1637px;top:54px;" width="16" height="16" viewBox="0 0 16 16"><rect x="5" y="1.500" width="9.500" height="9.500" fill="#e0e0e0"/><path d="M6 9.500L9 6L11 8L12.500 6.500L13.500 8V10H6Z" fill="#333"/><circle cx="11.800" cy="4" r="1" fill="#333"/><path d="M3.200 4V12.800H12M1.200 6V14.800H10" fill="none" stroke="#e0e0e0" stroke-width="1.100"/></svg>
<svg class="a" style="left:1654px;top:60px;" width="8" height="5.5" viewBox="0 0 8 5.5"><path d="M1.600 1.200L4.0 4.3L6.4 1.200" fill="none" stroke="#d0d0d0" stroke-width="1.4" stroke-linecap="round" stroke-linejoin="round"/></svg>
<div class="a" style="left:1687.5px;top:52.5px;width:110px;height:19px;background:#1d1d1d;border-radius:4px;border:1px solid #333;"></div>
<svg class="a" style="left:1690px;top:53px;" width="18" height="18" viewBox="0 0 18 18"><circle cx="10.500" cy="7" r="4" fill="none" stroke="#e0e0e0" stroke-width="1.300"/><path d="M7.800 10L3.500 15" stroke="#e0e0e0" stroke-width="1.300"/></svg>
<div class="a" style="left:1855.5px;top:52.5px;width:31px;height:19px;background:#2c2c2c;border-radius:4px;border:1px solid #444;"></div>
<svg class="a" style="left:1857px;top:53px;" width="18" height="18" viewBox="0 0 18 18"><path d="M2.500 3.500H14.500L9.800 9V14.500L7.500 13V9Z" fill="none" stroke="#e0e0e0" stroke-width="1.200" stroke-linejoin="round"/></svg>
<svg class="a" style="left:1876px;top:60px;" width="8" height="5.5" viewBox="0 0 8 5.5"><path d="M1.600 1.200L4.0 4.3L6.4 1.200" fill="none" stroke="#d0d0d0" stroke-width="1.4" stroke-linecap="round" stroke-linejoin="round"/></svg>
<div class="a" style="left:1893px;top:53px;width:18px;height:18px;background:#545454;border-radius:4px;"></div>
<svg class="a" style="left:1893px;top:53px;" width="18" height="18" viewBox="0 0 18 18"><path d="M2.500 6.500H11.500V8.500H2.500Z M3.500 9V15H10.500V9" fill="none" stroke="#d0d0d0" stroke-width="1.100"/><path d="M6 11.500H8.500" stroke="#d0d0d0" stroke-width="1.300"/><circle cx="13" cy="5" r="3.300" fill="#e8e8e8"/><path d="M13 3V7M11 5H15" stroke="#444" stroke-width="1"/></svg>
<svg class="a" style="left:1610px;top:78px;" width="16" height="16" viewBox="0 0 16 16"><path d="M1.500 2H14.500V5H1.500Z M2.500 5V14.500H13.500V5" fill="none" stroke="#e0e0e0" stroke-width="1.200"/><path d="M6 8.500H10" stroke="#e0e0e0" stroke-width="1.600"/></svg>
<div class="a t" style="left:1632px;top:77px;height:20px;line-height:20px;font-size:11px;color:#e0e0e0;">Scene Collection</div>
<svg class="a" style="left:1612px;top:100px;" width="12" height="12" viewBox="0 0 12 12"><path d="M2.500 3.500H9.500L6 9.500Z" fill="#b8b8b8"/></svg>
<div class="a" style="left:1633px;top:101px;width:10px;height:10px;background:#e6e6e6;border-radius:1.5px;"></div>
<svg class="a" style="left:1633px;top:101px;" width="10" height="10" viewBox="0 0 10 10"><path d="M2 5L4.200 7.500L8.500 2.200" fill="none" stroke="#1a1a1a" stroke-width="1.500"/></svg>
<div class="a" style="left:1648px;top:97px;width:20px;height:19px;background:#4a4a4a;border-radius:5px;border:1px solid #5a5a5a;"></div>
<svg class="a" style="left:1650px;top:98.5px;" width="16" height="16" viewBox="0 0 16 16"><path d="M1.500 2H14.500V5H1.500Z M2.500 5V14.500H13.500V5" fill="none" stroke="#e0e0e0" stroke-width="1.200"/><path d="M6 8.500H10" stroke="#e0e0e0" stroke-width="1.600"/></svg>
<div class="a t" style="left:1672px;top:97px;height:20px;line-height:20px;font-size:11px;color:#e0e0e0;">Collection</div>
<svg class="a" style="left:0px;top:0px;" width="1920" height="200" viewBox="0 0 1920 200"><path d="M1637.500 111V166.500M1637.500 126.500H1652M1637.500 146.500H1652M1637.500 166.500H1652" fill="none" stroke="#8a8a8a" stroke-width="1"/><path d="M1635 123L1641 126.500L1635 130Z M1635 143L1641 146.500L1635 150Z M1635 163L1641 166.500L1635 170Z" fill="#b0b0b0"/></svg>
<svg class="a" style="left:1650px;top:118px;" width="16" height="16" viewBox="0 0 16 16"><circle cx="4.800" cy="4.800" r="2.900" fill="#e8964c"/><circle cx="10.500" cy="4.200" r="3.600" fill="#e8964c"/><rect x="3" y="8" width="9.500" height="6" rx="1" fill="#e8964c"/><path d="M12.500 11L15.500 8.500V14Z" fill="#e8964c"/><path d="M1 9.500H3V12H1Z" fill="#e8964c"/><circle cx="4.800" cy="4.800" r=".900" fill="#2a2a2a"/><circle cx="10.500" cy="4.200" r="1.100" fill="#2a2a2a"/></svg>
<div class="a t" style="left:1672px;top:117px;height:20px;line-height:20px;font-size:11px;color:#e0e0e0;">Camera</div>
<div class="a" style="left:1731px;top:117px;width:21px;height:18.5px;background:#555;border-radius:5px;"></div>
<svg class="a" style="left:1733px;top:118px;" width="17" height="17" viewBox="0 0 17 17"><circle cx="5" cy="5.500" r="2.800" fill="none" stroke="#2fc4a0" stroke-width="1.100"/><circle cx="10.800" cy="4.800" r="3.500" fill="none" stroke="#2fc4a0" stroke-width="1.100"/><rect x="3.500" y="9" width="9" height="5.500" rx="1" fill="none" stroke="#2fc4a0" stroke-width="1.100"/><path d="M12.500 11.800L15.500 9.500V14.500Z M1.500 10.500H3.500V13H1.500Z" fill="#2fc4a0"/><circle cx="10.800" cy="4.800" r=".800" fill="#2fc4a0"/></svg>
<div class="a" style="left:1648px;top:137px;width:20px;height:19px;background:rgba(255,255,255,.22);border-radius:5px;"></div>
<svg class="a" style="left:1650px;top:138.5px;" width="16" height="16" viewBox="0 0 16 16"><path d="M1.500 1.500H14.500L8 14.500Z M5.300 4L8 9.500L10.700 4Z" fill="#e8964c" fill-rule="evenodd"/></svg>
<div class="a t" style="left:1672px;top:137px;height:20px;line-height:20px;font-size:11px;color:#ffaf29;">Cube</div>
<svg class="a" style="left:1719px;top:138px;" width="16" height="16" viewBox="0 0 16 16"><path d="M3 3H13L8 13Z" fill="none" stroke="#2fc4a0" stroke-width="1.200"/><rect x="1.300" y="1.300" width="3.400" height="3.400" fill="#2a3b5c" stroke="#2fc4a0" stroke-width="1.100"/><rect x="11.300" y="1.300" width="3.400" height="3.400" fill="#2a3b5c" stroke="#2fc4a0" stroke-width="1.100"/><rect x="6.300" y="11.300" width="3.400" height="3.400" fill="#2a3b5c" stroke="#2fc4a0" stroke-width="1.100"/></svg>
<svg class="a" style="left:1650px;top:158px;" width="16" height="17" viewBox="0 0 16 17"><circle cx="8" cy="6.500" r="5.800" fill="#e8964c"/><path d="M5 11.500H11V13H5Z M6 14H10V15H6Z M7 16H9V16.800H7Z" fill="#e8964c"/><path d="M5.500 6H10.500M6 6V8.500M10 6V8.500M6 8.500H7.500M8.500 8.500H10" stroke="#2a2a2a" stroke-width="1" fill="none"/></svg>
<div class="a t" style="left:1672px;top:157px;height:20px;line-height:20px;font-size:11px;color:#e0e0e0;">Light</div>
<svg class="a" style="left:1718px;top:158px;" width="16" height="17" viewBox="0 0 16 17"><path d="M5.800 12.500A6 6 0 1 1 10.200 12.500" fill="none" stroke="#2fc4a0" stroke-width="1.100"/><circle cx="8" cy="7" r="1.100" fill="none" stroke="#2fc4a0" stroke-width="1"/><path d="M8 8.500V16" stroke="#2fc4a0" stroke-width="1.100" stroke-dasharray="3 1.200"/></svg>
<svg class="a" style="left:1894px;top:97.5px;" width="16" height="16" viewBox="0 0 16 16"><path d="M1 8C4 2.800 12 2.800 15 8C12 13.200 4 13.200 1 8Z" fill="#e6e6e6"/><circle cx="8" cy="8" r="3.300" fill="#2a2a2a"/><circle cx="8" cy="8" r="1.700" fill="#e6e6e6"/></svg>
<svg class="a" style="left:1894px;top:117.5px;" width="16" height="16" viewBox="0 0 16 16"><path d="M1 8C4 2.800 12 2.800 15 8C12 13.200 4 13.200 1 8Z" fill="#e6e6e6"/><circle cx="8" cy="8" r="3.300" fill="#2a2a2a"/><circle cx="8" cy="8" r="1.700" fill="#e6e6e6"/></svg>
<svg class="a" style="left:1894px;top:137.5px;" width="16" height="16" viewBox="0 0 16 16"><path d="M1 8C4 2.800 12 2.800 15 8C12 13.200 4 13.200 1 8Z" fill="#e6e6e6"/><circle cx="8" cy="8" r="3.300" fill="#2a2a2a"/><circle cx="8" cy="8" r="1.700" fill="#e6e6e6"/></svg>
<svg class="a" style="left:1894px;top:157.5px;" width="16" height="16" viewBox="0 0 16 16"><path d="M1 8C4 2.800 12 2.800 15 8C12 13.200 4 13.200 1 8Z" fill="#e6e6e6"/><circle cx="8" cy="8" r="3.300" fill="#2a2a2a"/><circle cx="8" cy="8" r="1.700" fill="#e6e6e6"/></svg>
<div class="a" style="left:1588px;top:363px;width:330.5px;height:656px;background:#232323;border-radius:5px;overflow:hidden;"><div class="a" style="left:0px;top:0px;width:330.5px;height:25px;background:#3a3a3a;"></div><div class="a" style="left:0px;top:25px;width:28px;height:631px;background:#232323;"></div><div class="a" style="left:28px;top:25px;width:302.5px;height:631px;background:#424242;"></div><div class="a" style="left:28px;top:85px;width:302.5px;height:254.5px;background:#3a3a3a;"></div></div>
<div class="a" style="left:1597px;top:366px;width:30px;height:18.5px;background:#2c2c2c;border-radius:4px;border:1px solid #444;"></div>
<svg class="a" style="left:1599px;top:367px;" width="18" height="17" viewBox="0 0 18 17"><rect x="2.500" y="2.500" width="12" height="5" rx="2.500" fill="#e0e0e0"/><rect x="2.500" y="9.500" width="12" height="5" rx="2.500" fill="#e0e0e0"/><circle cx="11.500" cy="5" r="1.600" fill="#2c2c2c"/><circle cx="5.500" cy="12" r="1.600" fill="#2c2c2c"/></svg>
<svg class="a" style="left:1617px;top:373.5px;" width="8" height="5.5" viewBox="0 0 8 5.5"><path d="M1.600 1.200L4.0 4.3L6.4 1.200" fill="none" stroke="#d0d0d0" stroke-width="1.4" stroke-linecap="round" stroke-linejoin="round"/></svg>
<svg class="a" style="left:1641.5px;top:367px;" width="16" height="16" viewBox="0 0 16 16"><rect x="4.500" y="4.500" width="7" height="7" fill="#e0e0e0"/><path d="M1.500 4.500V1.500H4.500M11.500 1.500H14.500V4.500M14.500 11.500V14.500H11.500M4.500 14.500H1.500V11.500" fill="none" stroke="#e0e0e0" stroke-width="1.200"/></svg>
<div class="a t" style="left:1665px;top:366px;height:19px;line-height:19px;font-size:11px;color:#e0e0e0;">Cube</div>
<svg class="a" style="left:1893px;top:366px;" width="18" height="18" viewBox="0 0 18 18"><path d="M11.500 2.500L15.500 6.500L13.500 7L11 9.500L10.500 12.500L5.500 7.500L8.500 7L11 4.500Z" fill="none" stroke="#b0b0b0" stroke-width="1.100" stroke-linejoin="round"/><path d="M8 10L2.500 15.500" stroke="#b0b0b0" stroke-width="1.100"/></svg>
<div class="a" style="left:1590px;top:397px;width:26px;height:26px;background:#2b2b2b;border-radius:4px 0 0 4px;"></div>
<div class="a" style="left:1590px;top:433px;width:26px;height:26px;background:#2b2b2b;border-radius:4px 0 0 4px;"></div>
<div class="a" style="left:1590px;top:461px;width:26px;height:26px;background:#2b2b2b;border-radius:4px 0 0 4px;"></div>
<div class="a" style="left:1590px;top:489px;width:26px;height:26px;background:#2b2b2b;border-radius:4px 0 0 4px;"></div>
<div class="a" style="left:1590px;top:517px;width:26px;height:26px;background:#2b2b2b;border-radius:4px 0 0 4px;"></div>
<div class="a" style="left:1590px;top:545px;width:26px;height:26px;background:#2b2b2b;border-radius:4px 0 0 4px;"></div>
<div class="a" style="left:1590px;top:581px;width:26px;height:26px;background:#424242;border-radius:4px 0 0 4px;"></div>
<div class="a" style="left:1590px;top:609px;width:26px;height:26px;background:#2b2b2b;border-radius:4px 0 0 4px;"></div>
<div class="a" style="left:1590px;top:637px;width:26px;height:26px;background:#2b2b2b;border-radius:4px 0 0 4px;"></div>
<div class="a" style="left:1590px;top:665px;width:26px;height:26px;background:#2b2b2b;border-radius:4px 0 0 4px;"></div>
<div class="a" style="left:1590px;top:693px;width:26px;height:26px;background:#2b2b2b;border-radius:4px 0 0 4px;"></div>
<div class="a" style="left:1590px;top:721px;width:26px;height:26px;background:#2b2b2b;border-radius:4px 0 0 4px;"></div>
<div class="a" style="left:1590px;top:749px;width:26px;height:26px;background:#2b2b2b;border-radius:4px 0 0 4px;"></div>
<div class="a" style="left:1590px;top:785px;width:26px;height:26px;background:#2b2b2b;border-radius:4px 0 0 4px;"></div>
<svg class="a" style="left:1594.5px;top:401.5px;" width="17" height="17" viewBox="0 0 17 17"><path d="M4 2V8" stroke="#d8d8d8" stroke-width="1.200"/><ellipse cx="4" cy="12" rx="2.200" ry="3" fill="#d8d8d8"/><path d="M9.500 2.500V5.500A2.500 2.500 0 0 0 14.500 5.500V2.500" fill="none" stroke="#d8d8d8" stroke-width="1.500"/><path d="M12 7.500V15" stroke="#d8d8d8" stroke-width="2"/></svg>
<svg class="a" style="left:1594.5px;top:437.5px;" width="17" height="17" viewBox="0 0 17 17"><rect x="1.500" y="5.500" width="14" height="9.500" rx="1" fill="none" stroke="#d8d8d8" stroke-width="1.300"/><path d="M5 5.500V3H10V5.500" fill="none" stroke="#d8d8d8" stroke-width="1.300"/><path d="M3.500 8.500H10.500M3.500 10.500H10.500M3.500 12.500H10.500" stroke="#d8d8d8" stroke-width="1"/><circle cx="13" cy="9" r="1" fill="#d8d8d8"/><circle cx="13" cy="12" r="1" fill="#d8d8d8"/></svg>
<svg class="a" style="left:1594.5px;top:465.5px;" width="17" height="17" viewBox="0 0 17 17"><path d="M1.500 7V3.500A1.500 1.500 0 0 1 3 2H14A1.500 1.500 0 0 1 15.500 3.500V7Z" fill="#d8d8d8"/><path d="M4.500 7.500V15H12.500V7.500" fill="none" stroke="#d8d8d8" stroke-width="1.200"/><path d="M5.500 14L8 10.500L9.500 12L10.500 11L11.500 12.500V14Z" fill="#d8d8d8"/></svg>
<svg class="a" style="left:1595px;top:494px;" width="16" height="16" viewBox="0 0 16 16"><rect x="5" y="1.500" width="9.500" height="9.500" fill="#d8d8d8"/><path d="M6 9.500L9 6L11 8L12.500 6.500L13.500 8V10H6Z" fill="#333"/><circle cx="11.800" cy="4" r="1" fill="#333"/><path d="M3.200 4V12.800H12M1.200 6V14.800H10" fill="none" stroke="#d8d8d8" stroke-width="1.100"/></svg>
<svg class="a" style="left:1594.5px;top:521.5px;" width="17" height="17" viewBox="0 0 17 17"><path d="M5 2.500L8 10A3 3 0 1 1 2 10Z" fill="#d8d8d8"/><circle cx="13" cy="4" r="1.800" fill="#d8d8d8"/><circle cx="11.500" cy="12" r="3.300" fill="none" stroke="#d8d8d8" stroke-width="1.200"/><path d="M10 10.500A2.500 2.500 0 0 1 13 10" fill="none" stroke="#d8d8d8" stroke-width="1"/></svg>
<svg class="a" style="left:1594.5px;top:549.5px;" width="17" height="17" viewBox="0 0 17 17"><circle cx="8.500" cy="8.500" r="6" fill="none" stroke="#e06c75" stroke-width="1.300"/><path d="M4 5.500C6 5 7 6.500 6 8S7 10.500 8.500 11S9 14 8.500 14.500M10 3C9.500 5 12 5.500 13.500 5" fill="none" stroke="#e06c75" stroke-width="1.500"/><path d="M2 14.500C5 15.500 13 8 15 2.500" fill="none" stroke="#e06c75" stroke-width="1.100"/></svg>
<svg class="a" style="left:1595px;top:586px;" width="16" height="16" viewBox="0 0 16 16"><rect x="4.500" y="4.500" width="7" height="7" fill="#f0964a"/><path d="M1.500 4.500V1.500H4.500M11.500 1.500H14.500V4.500M14.500 11.500V14.500H11.500M4.500 14.500H1.500V11.500" fill="none" stroke="#f0964a" stroke-width="1.200"/></svg>
<svg class="a" style="left:1594.5px;top:613.5px;" width="17" height="17" viewBox="0 0 17 17"><path d="M3.500 14.500L9.500 8.500" stroke="#6d9fe0" stroke-width="3.200" stroke-linecap="round"/><path d="M14.800 4.500A4 4 0 1 1 11.300 1.800L11.300 4.800L13 6.300Z" fill="#6d9fe0"/></svg>
<svg class="a" style="left:1594.5px;top:641.5px;" width="17" height="17" viewBox="0 0 17 17"><circle cx="3.500" cy="3.500" r="2" fill="#6d9fe0"/><circle cx="13.500" cy="4" r="1.500" fill="#6d9fe0"/><circle cx="4" cy="14" r="1.500" fill="#6d9fe0"/><circle cx="13.500" cy="13.500" r="1.700" fill="#6d9fe0"/><path d="M3.500 3.500L13.500 4M3.500 3.500L4 14M3.500 3.500L13.500 13.500" stroke="#6d9fe0" stroke-width="1"/></svg>
<svg class="a" style="left:1594.5px;top:669.5px;" width="17" height="17" viewBox="0 0 17 17"><circle cx="8" cy="9" r="5.500" fill="none" stroke="#6d9fe0" stroke-width="1.300" stroke-dasharray="28 6"/><circle cx="8" cy="9" r="2.300" fill="#6d9fe0"/><circle cx="13.500" cy="3.500" r="1.700" fill="#6d9fe0"/></svg>
<svg class="a" style="left:1594.5px;top:697.5px;" width="17" height="17" viewBox="0 0 17 17"><path d="M2.500 11.500L9 3.500A3.500 3.500 0 0 1 14.500 8L8 14.500A4 4 0 0 1 2.500 11.500Z" fill="none" stroke="#6d9fe0" stroke-width="1.300"/><circle cx="6" cy="11" r="2.300" fill="none" stroke="#6d9fe0" stroke-width="1.200"/><circle cx="6" cy="11" r=".800" fill="#6d9fe0"/><circle cx="12" cy="5.500" r="1" fill="#6d9fe0"/></svg>
<svg class="a" style="left:1595px;top:726px;" width="16" height="16" viewBox="0 0 16 16"><path d="M3 3H13L8 13Z" fill="none" stroke="#2fc4a0" stroke-width="1.200"/><rect x="1.300" y="1.300" width="3.400" height="3.400" fill="#2b2b2b" stroke="#2fc4a0" stroke-width="1.100"/><rect x="11.300" y="1.300" width="3.400" height="3.400" fill="#2b2b2b" stroke="#2fc4a0" stroke-width="1.100"/><rect x="6.300" y="11.300" width="3.400" height="3.400" fill="#2b2b2b" stroke="#2fc4a0" stroke-width="1.100"/></svg>
<svg class="a" style="left:1594.5px;top:753.5px;" width="17" height="17" viewBox="0 0 17 17"><circle cx="8.500" cy="8.500" r="6.300" fill="#e06c75"/><path d="M8.500 8.500V2.200A6.300 6.300 0 0 1 14.800 8.500Z M8.500 8.500V14.800A6.300 6.300 0 0 1 2.200 8.500Z" fill="#2b2b2b"/></svg>
<svg class="a" style="left:1594.5px;top:789.5px;" width="17" height="17" viewBox="0 0 17 17"><rect x="1.500" y="1.500" width="14" height="14" fill="none" stroke="#e06c75" stroke-width="1"/><rect x="2.0" y="2.0" width="3.250" height="3.250" fill="#e06c75"/><rect x="2.0" y="8.5" width="3.250" height="3.250" fill="#e06c75"/><rect x="5.25" y="5.25" width="3.250" height="3.250" fill="#e06c75"/><rect x="5.25" y="11.75" width="3.250" height="3.250" fill="#e06c75"/><rect x="8.5" y="2.0" width="3.250" height="3.250" fill="#e06c75"/><rect x="8.5" y="8.5" width="3.250" height="3.250" fill="#e06c75"/><rect x="11.75" y="5.25" width="3.250" height="3.250" fill="#e06c75"/><rect x="11.75" y="11.75" width="3.250" height="3.250" fill="#e06c75"/></svg>
<div class="a" style="left:1625px;top:397px;width:31px;height:17.8px;background:#2c2c2c;border-radius:4px 0 0 4px;border:1px solid #3d3d3d;"></div>
<svg class="a" style="left:1628px;top:398.5px;" width="16" height="16" viewBox="0 0 16 16"><rect x="4.500" y="4.500" width="7" height="7" fill="#e0e0e0"/><path d="M1.500 4.500V1.500H4.500M11.500 1.500H14.500V4.500M14.500 11.500V14.500H11.500M4.500 14.500H1.500V11.500" fill="none" stroke="#e0e0e0" stroke-width="1.200"/></svg>
<svg class="a" style="left:1645.5px;top:404.5px;" width="8" height="5.5" viewBox="0 0 8 5.5"><path d="M1.600 1.200L4.0 4.3L6.4 1.200" fill="none" stroke="#d0d0d0" stroke-width="1.4" stroke-linecap="round" stroke-linejoin="round"/></svg>
<div class="a" style="left:1656px;top:397px;width:255px;height:17.8px;background:#1d1d1d;border-radius:0 4px 4px 0;"></div>
<div class="a t" style="left:1663px;top:397px;height:18px;line-height:18px;font-size:11px;color:#e0e0e0;">Cube</div>
<svg class="a" style="left:1624px;top:431px;" width="10" height="10" viewBox="0 0 10 10"><path d="M1.500 2.500H8.500L5 8.500Z" fill="#b8b8b8"/></svg>
<div class="a t" style="left:1638px;top:427px;height:20px;line-height:20px;font-size:12px;color:#e0e0e0;letter-spacing:0.196px;">Transform</div>
<svg class="a" style="left:1901px;top:433px;" width="12" height="6" viewBox="0 0 12 6"><rect x="0.9" y="0.9" width="1.500" height="1.500" fill="#5a5a5a"/><rect x="0.4" y="0.4" width="1.500" height="1.500" fill="#1c1c1c"/><rect x="0.9" y="3.9" width="1.500" height="1.500" fill="#5a5a5a"/><rect x="0.4" y="3.4" width="1.500" height="1.500" fill="#1c1c1c"/><rect x="3.9" y="0.9" width="1.500" height="1.500" fill="#5a5a5a"/><rect x="3.4" y="0.4" width="1.500" height="1.500" fill="#1c1c1c"/><rect x="3.9" y="3.9" width="1.500" height="1.500" fill="#5a5a5a"/><rect x="3.4" y="3.4" width="1.500" height="1.500" fill="#1c1c1c"/><rect x="6.9" y="0.9" width="1.500" height="1.500" fill="#5a5a5a"/><rect x="6.4" y="0.4" width="1.500" height="1.500" fill="#1c1c1c"/><rect x="6.9" y="3.9" width="1.500" height="1.500" fill="#5a5a5a"/><rect x="6.4" y="3.4" width="1.500" height="1.500" fill="#1c1c1c"/><rect x="9.9" y="0.9" width="1.500" height="1.500" fill="#5a5a5a"/><rect x="9.4" y="0.4" width="1.500" height="1.500" fill="#1c1c1c"/><rect x="9.9" y="3.9" width="1.500" height="1.500" fill="#5a5a5a"/><rect x="9.4" y="3.4" width="1.500" height="1.500" fill="#1c1c1c"/></svg>
<div class="a" style="left:1759px;top:456.5px;width:112.5px;height:18.7px;background:#595959;border-radius:4px 4px 0 0;"></div>
<div class="a t" style="left:1759px;top:456.5px;width:112.5px;height:18.7px;line-height:18.7px;font-size:11px;color:#e6e6e6;text-align:center;letter-spacing:0.4px;">0 m</div>
<div class="a t" style="right:170.5px;top:456.5px;height:18.7px;line-height:18.7px;font-size:11px;color:#e0e0e0;text-align:right;letter-spacing:0.127px;">Location X</div>
<svg class="a" style="left:1873.5px;top:457.0px;" width="16" height="16" viewBox="0 0 16 16"><path d="M1.500 7V5A2.700 2.700 0 0 1 6.900 5V8" fill="none" stroke="#c8c8c8" stroke-width="1.100"/><rect x="5.500" y="7.500" width="8" height="6" fill="none" stroke="#c8c8c8" stroke-width="1.100"/><path d="M9.500 9.500V11.500" stroke="#c8c8c8" stroke-width="1.300"/></svg>
<div class="a" style="left:1900px;top:463.8px;width:4px;height:4px;background:#e0e0e0;border-radius:2px;"></div>
<div class="a" style="left:1759px;top:476.5px;width:112.5px;height:18.7px;background:#595959;"></div>
<div class="a t" style="left:1759px;top:476.5px;width:112.5px;height:18.7px;line-height:18.7px;font-size:11px;color:#e6e6e6;text-align:center;letter-spacing:0.4px;">0 m</div>
<div class="a t" style="right:170.5px;top:476.5px;height:18.7px;line-height:18.7px;font-size:11px;color:#e0e0e0;text-align:right;">Y</div>
<svg class="a" style="left:1873.5px;top:477.0px;" width="16" height="16" viewBox="0 0 16 16"><path d="M1.500 7V5A2.700 2.700 0 0 1 6.900 5V8" fill="none" stroke="#c8c8c8" stroke-width="1.100"/><rect x="5.500" y="7.500" width="8" height="6" fill="none" stroke="#c8c8c8" stroke-width="1.100"/><path d="M9.500 9.500V11.500" stroke="#c8c8c8" stroke-width="1.300"/></svg>
<div class="a" style="left:1900px;top:483.8px;width:4px;height:4px;background:#e0e0e0;border-radius:2px;"></div>
<div class="a" style="left:1759px;top:496.0px;width:112.5px;height:18.7px;background:#595959;border-radius:0 0 4px 4px;"></div>
<div class="a t" style="left:1759px;top:496.0px;width:112.5px;height:18.7px;line-height:18.7px;font-size:11px;color:#e6e6e6;text-align:center;letter-spacing:0.4px;">0 m</div>
<div class="a t" style="right:170.5px;top:496.0px;height:18.7px;line-height:18.7px;font-size:11px;color:#e0e0e0;text-align:right;">Z</div>
<svg class="a" style="left:1873.5px;top:496.5px;" width="16" height="16" viewBox="0 0 16 16"><path d="M1.500 7V5A2.700 2.700 0 0 1 6.900 5V8" fill="none" stroke="#c8c8c8" stroke-width="1.100"/><rect x="5.500" y="7.500" width="8" height="6" fill="none" stroke="#c8c8c8" stroke-width="1.100"/><path d="M9.500 9.500V11.500" stroke="#c8c8c8" stroke-width="1.300"/></svg>
<div class="a" style="left:1900px;top:503.3px;width:4px;height:4px;background:#e0e0e0;border-radius:2px;"></div>
<div class="a" style="left:1759px;top:521.5px;width:112.5px;height:18.7px;background:#595959;border-radius:4px 4px 0 0;"></div>
<div class="a t" style="left:1759px;top:521.5px;width:112.5px;height:18.7px;line-height:18.7px;font-size:11px;color:#e6e6e6;text-align:center;letter-spacing:0.4px;">0°</div>
<div class="a t" style="right:170.5px;top:521.5px;height:18.7px;line-height:18.7px;font-size:11px;color:#e0e0e0;text-align:right;letter-spacing:0.062px;">Rotation X</div>
<svg class="a" style="left:1873.5px;top:522.0px;" width="16" height="16" viewBox="0 0 16 16"><path d="M1.500 7V5A2.700 2.700 0 0 1 6.900 5V8" fill="none" stroke="#c8c8c8" stroke-width="1.100"/><rect x="5.500" y="7.500" width="8" height="6" fill="none" stroke="#c8c8c8" stroke-width="1.100"/><path d="M9.500 9.500V11.500" stroke="#c8c8c8" stroke-width="1.300"/></svg>
<div class="a" style="left:1900px;top:528.8px;width:4px;height:4px;background:#e0e0e0;border-radius:2px;"></div>
<div class="a" style="left:1759px;top:541.5px;width:112.5px;height:18.7px;background:#595959;"></div>
<div class="a t" style="left:1759px;top:541.5px;width:112.5px;height:18.7px;line-height:18.7px;font-size:11px;color:#e6e6e6;text-align:center;letter-spacing:0.4px;">0°</div>
<div class="a t" style="right:170.5px;top:541.5px;height:18.7px;line-height:18.7px;font-size:11px;color:#e0e0e0;text-align:right;">Y</div>
<svg class="a" style="left:1873.5px;top:542.0px;" width="16" height="16" viewBox="0 0 16 16"><path d="M1.500 7V5A2.700 2.700 0 0 1 6.900 5V8" fill="none" stroke="#c8c8c8" stroke-width="1.100"/><rect x="5.500" y="7.500" width="8" height="6" fill="none" stroke="#c8c8c8" stroke-width="1.100"/><path d="M9.500 9.500V11.500" stroke="#c8c8c8" stroke-width="1.300"/></svg>
<div class="a" style="left:1900px;top:548.8px;width:4px;height:4px;background:#e0e0e0;border-radius:2px;"></div>
<div class="a" style="left:1759px;top:561.0px;width:112.5px;height:18.7px;background:#595959;border-radius:0 0 4px 4px;"></div>
<div class="a t" style="left:1759px;top:561.0px;width:112.5px;height:18.7px;line-height:18.7px;font-size:11px;color:#e6e6e6;text-align:center;letter-spacing:0.4px;">0°</div>
<div class="a t" style="right:170.5px;top:561.0px;height:18.7px;line-height:18.7px;font-size:11px;color:#e0e0e0;text-align:right;">Z</div>
<svg class="a" style="left:1873.5px;top:561.5px;" width="16" height="16" viewBox="0 0 16 16"><path d="M1.500 7V5A2.700 2.700 0 0 1 6.900 5V8" fill="none" stroke="#c8c8c8" stroke-width="1.100"/><rect x="5.500" y="7.500" width="8" height="6" fill="none" stroke="#c8c8c8" stroke-width="1.100"/><path d="M9.500 9.500V11.500" stroke="#c8c8c8" stroke-width="1.300"/></svg>
<div class="a" style="left:1900px;top:568.3px;width:4px;height:4px;background:#e0e0e0;border-radius:2px;"></div>
<div class="a t" style="right:170.5px;top:587px;height:19px;line-height:19px;font-size:11px;color:#e0e0e0;text-align:right;letter-spacing:-0.133px;">Mode</div>
<div class="a" style="left:1759px;top:587px;width:112.5px;height:19px;background:#2c2c2c;border-radius:4px;border:1px solid #3d3d3d;"></div>
<div class="a t" style="left:1766px;top:587px;height:19px;line-height:19px;font-size:11px;color:#e0e0e0;">XYZ Euler</div>
<svg class="a" style="left:1860.5px;top:594.5px;" width="8.5" height="5.5" viewBox="0 0 8.5 5.5"><path d="M1.600 1.200L4.25 4.3L6.9 1.200" fill="none" stroke="#d0d0d0" stroke-width="1.4" stroke-linecap="round" stroke-linejoin="round"/></svg>
<div class="a" style="left:1900px;top:594.3px;width:4px;height:4px;background:#e0e0e0;border-radius:2px;"></div>
<div class="a" style="left:1759px;top:611.5px;width:112.5px;height:18.7px;background:#595959;border-radius:4px 4px 0 0;"></div>
<div class="a t" style="left:1759px;top:611.5px;width:112.5px;height:18.7px;line-height:18.7px;font-size:11px;color:#e6e6e6;text-align:center;letter-spacing:0.4px;">1.000</div>
<div class="a t" style="right:170.5px;top:611.5px;height:18.7px;line-height:18.7px;font-size:11px;color:#e0e0e0;text-align:right;letter-spacing:-0.132px;">Scale X</div>
<svg class="a" style="left:1873.5px;top:612.0px;" width="16" height="16" viewBox="0 0 16 16"><path d="M1.500 7V5A2.700 2.700 0 0 1 6.900 5V8" fill="none" stroke="#c8c8c8" stroke-width="1.100"/><rect x="5.500" y="7.500" width="8" height="6" fill="none" stroke="#c8c8c8" stroke-width="1.100"/><path d="M9.500 9.500V11.500" stroke="#c8c8c8" stroke-width="1.300"/></svg>
<div class="a" style="left:1900px;top:618.8px;width:4px;height:4px;background:#e0e0e0;border-radius:2px;"></div>
<div class="a" style="left:1759px;top:631.5px;width:112.5px;height:18.7px;background:#595959;"></div>
<div class="a t" style="left:1759px;top:631.5px;width:112.5px;height:18.7px;line-height:18.7px;font-size:11px;color:#e6e6e6;text-align:center;letter-spacing:0.4px;">1.000</div>
<div class="a t" style="right:170.5px;top:631.5px;height:18.7px;line-height:18.7px;font-size:11px;color:#e0e0e0;text-align:right;">Y</div>
<svg class="a" style="left:1873.5px;top:632.0px;" width="16" height="16" viewBox="0 0 16 16"><path d="M1.500 7V5A2.700 2.700 0 0 1 6.900 5V8" fill="none" stroke="#c8c8c8" stroke-width="1.100"/><rect x="5.500" y="7.500" width="8" height="6" fill="none" stroke="#c8c8c8" stroke-width="1.100"/><path d="M9.500 9.500V11.500" stroke="#c8c8c8" stroke-width="1.300"/></svg>
<div class="a" style="left:1900px;top:638.8px;width:4px;height:4px;background:#e0e0e0;border-radius:2px;"></div>
<div class="a" style="left:1759px;top:651.0px;width:112.5px;height:18.7px;background:#595959;border-radius:0 0 4px 4px;"></div>
<div class="a t" style="left:1759px;top:651.0px;width:112.5px;height:18.7px;line-height:18.7px;font-size:11px;color:#e6e6e6;text-align:center;letter-spacing:0.4px;">1.000</div>
<div class="a t" style="right:170.5px;top:651.0px;height:18.7px;line-height:18.7px;font-size:11px;color:#e0e0e0;text-align:right;">Z</div>
<svg class="a" style="left:1873.5px;top:651.5px;" width="16" height="16" viewBox="0 0 16 16"><path d="M1.500 7V5A2.700 2.700 0 0 1 6.900 5V8" fill="none" stroke="#c8c8c8" stroke-width="1.100"/><rect x="5.500" y="7.500" width="8" height="6" fill="none" stroke="#c8c8c8" stroke-width="1.100"/><path d="M9.500 9.500V11.500" stroke="#c8c8c8" stroke-width="1.300"/></svg>
<div class="a" style="left:1900px;top:658.3px;width:4px;height:4px;background:#e0e0e0;border-radius:2px;"></div>
<svg class="a" style="left:1637px;top:686.5px;" width="10" height="10" viewBox="0 0 10 10"><path d="M2.500 1.500V8.500L8.500 5Z" fill="#b0b0b0"/></svg>
<div class="a t" style="left:1652px;top:683px;height:19px;line-height:19px;font-size:11px;color:#e0e0e0;letter-spacing:0.083px;">Delta Transform</div>
<svg class="a" style="left:1623px;top:710px;" width="10" height="10" viewBox="0 0 10 10"><path d="M2.500 1.500V8.500L8.500 5Z" fill="#b0b0b0"/></svg>
<div class="a t" style="left:1638px;top:706px;height:20px;line-height:20px;font-size:12px;color:#e0e0e0;letter-spacing:0.191px;">Relations</div>
<svg class="a" style="left:1901px;top:711px;" width="12" height="6" viewBox="0 0 12 6"><rect x="0.9" y="0.9" width="1.500" height="1.500" fill="#5a5a5a"/><rect x="0.4" y="0.4" width="1.500" height="1.500" fill="#1c1c1c"/><rect x="0.9" y="3.9" width="1.500" height="1.500" fill="#5a5a5a"/><rect x="0.4" y="3.4" width="1.500" height="1.500" fill="#1c1c1c"/><rect x="3.9" y="0.9" width="1.500" height="1.500" fill="#5a5a5a"/><rect x="3.4" y="0.4" width="1.500" height="1.500" fill="#1c1c1c"/><rect x="3.9" y="3.9" width="1.500" height="1.500" fill="#5a5a5a"/><rect x="3.4" y="3.4" width="1.500" height="1.500" fill="#1c1c1c"/><rect x="6.9" y="0.9" width="1.500" height="1.500" fill="#5a5a5a"/><rect x="6.4" y="0.4" width="1.500" height="1.500" fill="#1c1c1c"/><rect x="6.9" y="3.9" width="1.500" height="1.500" fill="#5a5a5a"/><rect x="6.4" y="3.4" width="1.500" height="1.500" fill="#1c1c1c"/><rect x="9.9" y="0.9" width="1.500" height="1.500" fill="#5a5a5a"/><rect x="9.4" y="0.4" width="1.500" height="1.500" fill="#1c1c1c"/><rect x="9.9" y="3.9" width="1.500" height="1.500" fill="#5a5a5a"/><rect x="9.4" y="3.4" width="1.500" height="1.500" fill="#1c1c1c"/></svg>
<svg class="a" style="left:1623px;top:734px;" width="10" height="10" viewBox="0 0 10 10"><path d="M2.500 1.500V8.500L8.500 5Z" fill="#b0b0b0"/></svg>
<div class="a t" style="left:1638px;top:730px;height:20px;line-height:20px;font-size:12px;color:#e0e0e0;letter-spacing:0.163px;">Collections</div>
<svg class="a" style="left:1901px;top:735px;" width="12" height="6" viewBox="0 0 12 6"><rect x="0.9" y="0.9" width="1.500" height="1.500" fill="#5a5a5a"/><rect x="0.4" y="0.4" width="1.500" height="1.500" fill="#1c1c1c"/><rect x="0.9" y="3.9" width="1.500" height="1.500" fill="#5a5a5a"/><rect x="0.4" y="3.4" width="1.500" height="1.500" fill="#1c1c1c"/><rect x="3.9" y="0.9" width="1.500" height="1.500" fill="#5a5a5a"/><rect x="3.4" y="0.4" width="1.500" height="1.500" fill="#1c1c1c"/><rect x="3.9" y="3.9" width="1.500" height="1.500" fill="#5a5a5a"/><rect x="3.4" y="3.4" width="1.500" height="1.500" fill="#1c1c1c"/><rect x="6.9" y="0.9" width="1.500" height="1.500" fill="#5a5a5a"/><rect x="6.4" y="0.4" width="1.500" height="1.500" fill="#1c1c1c"/><rect x="6.9" y="3.9" width="1.500" height="1.500" fill="#5a5a5a"/><rect x="6.4" y="3.4" width="1.500" height="1.500" fill="#1c1c1c"/><rect x="9.9" y="0.9" width="1.500" height="1.500" fill="#5a5a5a"/><rect x="9.4" y="0.4" width="1.500" height="1.500" fill="#1c1c1c"/><rect x="9.9" y="3.9" width="1.500" height="1.500" fill="#5a5a5a"/><rect x="9.4" y="3.4" width="1.500" height="1.500" fill="#1c1c1c"/></svg>
<svg class="a" style="left:1623px;top:758px;" width="10" height="10" viewBox="0 0 10 10"><path d="M2.500 1.500V8.500L8.500 5Z" fill="#b0b0b0"/></svg>
<div class="a t" style="left:1638px;top:754px;height:20px;line-height:20px;font-size:12px;color:#e0e0e0;letter-spacing:0.205px;">Instancing</div>
<svg class="a" style="left:1901px;top:759px;" width="12" height="6" viewBox="0 0 12 6"><rect x="0.9" y="0.9" width="1.500" height="1.500" fill="#5a5a5a"/><rect x="0.4" y="0.4" width="1.500" height="1.500" fill="#1c1c1c"/><rect x="0.9" y="3.9" width="1.500" height="1.500" fill="#5a5a5a"/><rect x="0.4" y="3.4" width="1.500" height="1.500" fill="#1c1c1c"/><rect x="3.9" y="0.9" width="1.500" height="1.500" fill="#5a5a5a"/><rect x="3.4" y="0.4" width="1.500" height="1.500" fill="#1c1c1c"/><rect x="3.9" y="3.9" width="1.500" height="1.500" fill="#5a5a5a"/><rect x="3.4" y="3.4" width="1.500" height="1.500" fill="#1c1c1c"/><rect x="6.9" y="0.9" width="1.500" height="1.500" fill="#5a5a5a"/><rect x="6.4" y="0.4" width="1.500" height="1.500" fill="#1c1c1c"/><rect x="6.9" y="3.9" width="1.500" height="1.500" fill="#5a5a5a"/><rect x="6.4" y="3.4" width="1.500" height="1.500" fill="#1c1c1c"/><rect x="9.9" y="0.9" width="1.500" height="1.500" fill="#5a5a5a"/><rect x="9.4" y="0.4" width="1.500" height="1.500" fill="#1c1c1c"/><rect x="9.9" y="3.9" width="1.500" height="1.500" fill="#5a5a5a"/><rect x="9.4" y="3.4" width="1.500" height="1.500" fill="#1c1c1c"/></svg>
<svg class="a" style="left:1623px;top:782px;" width="10" height="10" viewBox="0 0 10 10"><path d="M2.500 1.500V8.500L8.500 5Z" fill="#b0b0b0"/></svg>
<div class="a t" style="left:1638px;top:778px;height:20px;line-height:20px;font-size:12px;color:#e0e0e0;letter-spacing:0.142px;">Motion Paths</div>
<svg class="a" style="left:1901px;top:783px;" width="12" height="6" viewBox="0 0 12 6"><rect x="0.9" y="0.9" width="1.500" height="1.500" fill="#5a5a5a"/><rect x="0.4" y="0.4" width="1.500" height="1.500" fill="#1c1c1c"/><rect x="0.9" y="3.9" width="1.500" height="1.500" fill="#5a5a5a"/><rect x="0.4" y="3.4" width="1.500" height="1.500" fill="#1c1c1c"/><rect x="3.9" y="0.9" width="1.500" height="1.500" fill="#5a5a5a"/><rect x="3.4" y="0.4" width="1.500" height="1.500" fill="#1c1c1c"/><rect x="3.9" y="3.9" width="1.500" height="1.500" fill="#5a5a5a"/><rect x="3.4" y="3.4" width="1.500" height="1.500" fill="#1c1c1c"/><rect x="6.9" y="0.9" width="1.500" height="1.500" fill="#5a5a5a"/><rect x="6.4" y="0.4" width="1.500" height="1.500" fill="#1c1c1c"/><rect x="6.9" y="3.9" width="1.500" height="1.500" fill="#5a5a5a"/><rect x="6.4" y="3.4" width="1.500" height="1.500" fill="#1c1c1c"/><rect x="9.9" y="0.9" width="1.500" height="1.500" fill="#5a5a5a"/><rect x="9.4" y="0.4" width="1.500" height="1.500" fill="#1c1c1c"/><rect x="9.9" y="3.9" width="1.500" height="1.500" fill="#5a5a5a"/><rect x="9.4" y="3.4" width="1.500" height="1.500" fill="#1c1c1c"/></svg>
<svg class="a" style="left:1623px;top:806px;" width="10" height="10" viewBox="0 0 10 10"><path d="M2.500 1.500V8.500L8.500 5Z" fill="#b0b0b0"/></svg>
<div class="a t" style="left:1638px;top:802px;height:20px;line-height:20px;font-size:12px;color:#e0e0e0;letter-spacing:0.338px;">Visibility</div>
<svg class="a" style="left:1901px;top:807px;" width="12" height="6" viewBox="0 0 12 6"><rect x="0.9" y="0.9" width="1.500" height="1.500" fill="#5a5a5a"/><rect x="0.4" y="0.4" width="1.500" height="1.500" fill="#1c1c1c"/><rect x="0.9" y="3.9" width="1.500" height="1.500" fill="#5a5a5a"/><rect x="0.4" y="3.4" width="1.500" height="1.500" fill="#1c1c1c"/><rect x="3.9" y="0.9" width="1.500" height="1.500" fill="#5a5a5a"/><rect x="3.4" y="0.4" width="1.500" height="1.500" fill="#1c1c1c"/><rect x="3.9" y="3.9" width="1.500" height="1.500" fill="#5a5a5a"/><rect x="3.4" y="3.4" width="1.500" height="1.500" fill="#1c1c1c"/><rect x="6.9" y="0.9" width="1.500" height="1.500" fill="#5a5a5a"/><rect x="6.4" y="0.4" width="1.500" height="1.500" fill="#1c1c1c"/><rect x="6.9" y="3.9" width="1.500" height="1.500" fill="#5a5a5a"/><rect x="6.4" y="3.4" width="1.500" height="1.500" fill="#1c1c1c"/><rect x="9.9" y="0.9" width="1.500" height="1.500" fill="#5a5a5a"/><rect x="9.4" y="0.4" width="1.500" height="1.500" fill="#1c1c1c"/><rect x="9.9" y="3.9" width="1.500" height="1.500" fill="#5a5a5a"/><rect x="9.4" y="3.4" width="1.500" height="1.500" fill="#1c1c1c"/></svg>
<svg class="a" style="left:1623px;top:830px;" width="10" height="10" viewBox="0 0 10 10"><path d="M2.500 1.500V8.500L8.500 5Z" fill="#b0b0b0"/></svg>
<div class="a t" style="left:1638px;top:826px;height:20px;line-height:20px;font-size:12px;color:#e0e0e0;letter-spacing:-0.015px;">ASS Object Properties</div>
<svg class="a" style="left:1901px;top:831px;" width="12" height="6" viewBox="0 0 12 6"><rect x="0.9" y="0.9" width="1.500" height="1.500" fill="#5a5a5a"/><rect x="0.4" y="0.4" width="1.500" height="1.500" fill="#1c1c1c"/><rect x="0.9" y="3.9" width="1.500" height="1.500" fill="#5a5a5a"/><rect x="0.4" y="3.4" width="1.500" height="1.500" fill="#1c1c1c"/><rect x="3.9" y="0.9" width="1.500" height="1.500" fill="#5a5a5a"/><rect x="3.4" y="0.4" width="1.500" height="1.500" fill="#1c1c1c"/><rect x="3.9" y="3.9" width="1.500" height="1.500" fill="#5a5a5a"/><rect x="3.4" y="3.4" width="1.500" height="1.500" fill="#1c1c1c"/><rect x="6.9" y="0.9" width="1.500" height="1.500" fill="#5a5a5a"/><rect x="6.4" y="0.4" width="1.500" height="1.500" fill="#1c1c1c"/><rect x="6.9" y="3.9" width="1.500" height="1.500" fill="#5a5a5a"/><rect x="6.4" y="3.4" width="1.500" height="1.500" fill="#1c1c1c"/><rect x="9.9" y="0.9" width="1.500" height="1.500" fill="#5a5a5a"/><rect x="9.4" y="0.4" width="1.500" height="1.500" fill="#1c1c1c"/><rect x="9.9" y="3.9" width="1.500" height="1.500" fill="#5a5a5a"/><rect x="9.4" y="3.4" width="1.500" height="1.500" fill="#1c1c1c"/></svg>
<svg class="a" style="left:1623px;top:854px;" width="10" height="10" viewBox="0 0 10 10"><path d="M2.500 1.500V8.500L8.500 5Z" fill="#b0b0b0"/></svg>
<div class="a t" style="left:1638px;top:850px;height:20px;line-height:20px;font-size:12px;color:#e0e0e0;letter-spacing:-0.121px;">JMS Object Properties</div>
<svg class="a" style="left:1901px;top:855px;" width="12" height="6" viewBox="0 0 12 6"><rect x="0.9" y="0.9" width="1.500" height="1.500" fill="#5a5a5a"/><rect x="0.4" y="0.4" width="1.500" height="1.500" fill="#1c1c1c"/><rect x="0.9" y="3.9" width="1.500" height="1.500" fill="#5a5a5a"/><rect x="0.4" y="3.4" width="1.500" height="1.500" fill="#1c1c1c"/><rect x="3.9" y="0.9" width="1.500" height="1.500" fill="#5a5a5a"/><rect x="3.4" y="0.4" width="1.500" height="1.500" fill="#1c1c1c"/><rect x="3.9" y="3.9" width="1.500" height="1.500" fill="#5a5a5a"/><rect x="3.4" y="3.4" width="1.500" height="1.500" fill="#1c1c1c"/><rect x="6.9" y="0.9" width="1.500" height="1.500" fill="#5a5a5a"/><rect x="6.4" y="0.4" width="1.500" height="1.500" fill="#1c1c1c"/><rect x="6.9" y="3.9" width="1.500" height="1.500" fill="#5a5a5a"/><rect x="6.4" y="3.4" width="1.500" height="1.500" fill="#1c1c1c"/><rect x="9.9" y="0.9" width="1.500" height="1.500" fill="#5a5a5a"/><rect x="9.4" y="0.4" width="1.500" height="1.500" fill="#1c1c1c"/><rect x="9.9" y="3.9" width="1.500" height="1.500" fill="#5a5a5a"/><rect x="9.4" y="3.4" width="1.500" height="1.500" fill="#1c1c1c"/></svg>
<svg class="a" style="left:1623px;top:878px;" width="10" height="10" viewBox="0 0 10 10"><path d="M2.500 1.500V8.500L8.500 5Z" fill="#b0b0b0"/></svg>
<div class="a t" style="left:1638px;top:874px;height:20px;line-height:20px;font-size:12px;color:#e0e0e0;letter-spacing:0.271px;">Viewport Display</div>
<svg class="a" style="left:1901px;top:879px;" width="12" height="6" viewBox="0 0 12 6"><rect x="0.9" y="0.9" width="1.500" height="1.500" fill="#5a5a5a"/><rect x="0.4" y="0.4" width="1.500" height="1.500" fill="#1c1c1c"/><rect x="0.9" y="3.9" width="1.500" height="1.500" fill="#5a5a5a"/><rect x="0.4" y="3.4" width="1.500" height="1.500" fill="#1c1c1c"/><rect x="3.9" y="0.9" width="1.500" height="1.500" fill="#5a5a5a"/><rect x="3.4" y="0.4" width="1.500" height="1.500" fill="#1c1c1c"/><rect x="3.9" y="3.9" width="1.500" height="1.500" fill="#5a5a5a"/><rect x="3.4" y="3.4" width="1.500" height="1.500" fill="#1c1c1c"/><rect x="6.9" y="0.9" width="1.500" height="1.500" fill="#5a5a5a"/><rect x="6.4" y="0.4" width="1.500" height="1.500" fill="#1c1c1c"/><rect x="6.9" y="3.9" width="1.500" height="1.500" fill="#5a5a5a"/><rect x="6.4" y="3.4" width="1.500" height="1.500" fill="#1c1c1c"/><rect x="9.9" y="0.9" width="1.500" height="1.500" fill="#5a5a5a"/><rect x="9.4" y="0.4" width="1.500" height="1.500" fill="#1c1c1c"/><rect x="9.9" y="3.9" width="1.500" height="1.500" fill="#5a5a5a"/><rect x="9.4" y="3.4" width="1.500" height="1.500" fill="#1c1c1c"/></svg>
<svg class="a" style="left:1623px;top:902px;" width="10" height="10" viewBox="0 0 10 10"><path d="M2.500 1.500V8.500L8.500 5Z" fill="#b0b0b0"/></svg>
<div class="a t" style="left:1638px;top:898px;height:20px;line-height:20px;font-size:12px;color:#e0e0e0;letter-spacing:0.14px;">Custom Properties</div>
<svg class="a" style="left:1901px;top:903px;" width="12" height="6" viewBox="0 0 12 6"><rect x="0.9" y="0.9" width="1.500" height="1.500" fill="#5a5a5a"/><rect x="0.4" y="0.4" width="1.500" height="1.500" fill="#1c1c1c"/><rect x="0.9" y="3.9" width="1.500" height="1.500" fill="#5a5a5a"/><rect x="0.4" y="3.4" width="1.500" height="1.500" fill="#1c1c1c"/><rect x="3.9" y="0.9" width="1.500" height="1.500" fill="#5a5a5a"/><rect x="3.4" y="0.4" width="1.500" height="1.500" fill="#1c1c1c"/><rect x="3.9" y="3.9" width="1.500" height="1.500" fill="#5a5a5a"/><rect x="3.4" y="3.4" width="1.500" height="1.500" fill="#1c1c1c"/><rect x="6.9" y="0.9" width="1.500" height="1.500" fill="#5a5a5a"/><rect x="6.4" y="0.4" width="1.500" height="1.500" fill="#1c1c1c"/><rect x="6.9" y="3.9" width="1.500" height="1.500" fill="#5a5a5a"/><rect x="6.4" y="3.4" width="1.500" height="1.500" fill="#1c1c1c"/><rect x="9.9" y="0.9" width="1.500" height="1.500" fill="#5a5a5a"/><rect x="9.4" y="0.4" width="1.500" height="1.500" fill="#1c1c1c"/><rect x="9.9" y="3.9" width="1.500" height="1.500" fill="#5a5a5a"/><rect x="9.4" y="3.4" width="1.500" height="1.500" fill="#1c1c1c"/></svg>
<div class="a" style="left:1px;top:947px;width:1584px;height:72.5px;background:#2b2b2b;border-radius:5px;overflow:hidden;"><div class="a" style="left:0px;top:0px;width:1584px;height:25px;background:#3a3a3a;"></div><div class="a" style="left:0px;top:25px;width:1584px;height:22.5px;background:#2c2c2c;"></div><div class="a" style="left:0px;top:47.5px;width:1584px;height:25.0px;background:#333;"></div><div class="a" style="left:51.4px;top:47.5px;width:1475.0px;height:25.0px;background:#424242;"></div><svg class="a" style="left:0;top:0" width="1584" height="72.5"><path d="M21.5 47.5V72.5" stroke="#2a2a2a" stroke-width="1"/><path d="M51.5 47.5V72.5" stroke="#222" stroke-width="1"/><path d="M80.5 47.5V72.5" stroke="#383838" stroke-width="1"/><path d="M110.5 47.5V72.5" stroke="#222" stroke-width="1"/><path d="M139.5 47.5V72.5" stroke="#383838" stroke-width="1"/><path d="M169.5 47.5V72.5" stroke="#222" stroke-width="1"/><path d="M198.5 47.5V72.5" stroke="#383838" stroke-width="1"/><path d="M228.5 47.5V72.5" stroke="#222" stroke-width="1"/><path d="M257.5 47.5V72.5" stroke="#383838" stroke-width="1"/><path d="M287.5 47.5V72.5" stroke="#222" stroke-width="1"/><path d="M316.5 47.5V72.5" stroke="#383838" stroke-width="1"/><path d="M346.5 47.5V72.5" stroke="#222" stroke-width="1"/><path d="M375.5 47.5V72.5" stroke="#383838" stroke-width="1"/><path d="M405.5 47.5V72.5" stroke="#222" stroke-width="1"/><path d="M434.5 47.5V72.5" stroke="#383838" stroke-width="1"/><path d="M464.5 47.5V72.5" stroke="#222" stroke-width="1"/><path d="M493.5 47.5V72.5" stroke="#383838" stroke-width="1"/><path d="M523.5 47.5V72.5" stroke="#222" stroke-width="1"/><path d="M552.5 47.5V72.5" stroke="#383838" stroke-width="1"/><path d="M582.5 47.5V72.5" stroke="#222" stroke-width="1"/><path d="M611.5 47.5V72.5" stroke="#383838" stroke-width="1"/><path d="M641.5 47.5V72.5" stroke="#222" stroke-width="1"/><path d="M670.5 47.5V72.5" stroke="#383838" stroke-width="1"/><path d="M700.5 47.5V72.5" stroke="#222" stroke-width="1"/><path d="M729.5 47.5V72.5" stroke="#383838" stroke-width="1"/><path d="M759.5 47.5V72.5" stroke="#222" stroke-width="1"/><path d="M788.5 47.5V72.5" stroke="#383838" stroke-width="1"/><path d="M818.5 47.5V72.5" stroke="#222" stroke-width="1"/><path d="M847.5 47.5V72.5" stroke="#383838" stroke-width="1"/><path d="M877.5 47.5V72.5" stroke="#222" stroke-width="1"/><path d="M906.5 47.5V72.5" stroke="#383838" stroke-width="1"/><path d="M936.5 47.5V72.5" stroke="#222" stroke-width="1"/><path d="M965.5 47.5V72.5" stroke="#383838" stroke-width="1"/><path d="M995.5 47.5V72.5" stroke="#222" stroke-width="1"/><path d="M1024.5 47.5V72.5" stroke="#383838" stroke-width="1"/><path d="M1054.5 47.5V72.5" stroke="#222" stroke-width="1"/><path d="M1083.5 47.5V72.5" stroke="#383838" stroke-width="1"/><path d="M1113.5 47.5V72.5" stroke="#222" stroke-width="1"/><path d="M1142.5 47.5V72.5" stroke="#383838" stroke-width="1"/><path d="M1172.5 47.5V72.5" stroke="#222" stroke-width="1"/><path d="M1201.5 47.5V72.5" stroke="#383838" stroke-width="1"/><path d="M1231.5 47.5V72.5" stroke="#222" stroke-width="1"/><path d="M1260.5 47.5V72.5" stroke="#383838" stroke-width="1"/><path d="M1290.5 47.5V72.5" stroke="#222" stroke-width="1"/><path d="M1319.5 47.5V72.5" stroke="#383838" stroke-width="1"/><path d="M1349.5 47.5V72.5" stroke="#222" stroke-width="1"/><path d="M1378.5 47.5V72.5" stroke="#383838" stroke-width="1"/><path d="M1408.5 47.5V72.5" stroke="#222" stroke-width="1"/><path d="M1437.5 47.5V72.5" stroke="#383838" stroke-width="1"/><path d="M1467.5 47.5V72.5" stroke="#222" stroke-width="1"/><path d="M1496.5 47.5V72.5" stroke="#383838" stroke-width="1"/><path d="M1526.5 47.5V72.5" stroke="#222" stroke-width="1"/><path d="M1555.5 47.5V72.5" stroke="#2a2a2a" stroke-width="1"/><path d="M1526.5 47.5V72.5" stroke="#0c0c0c" stroke-width="1.200"/></svg></div>
<div class="a" style="left:9px;top:950.5px;width:30.5px;height:19px;background:#2c2c2c;border-radius:4px;border:1px solid #444;"></div>
<svg class="a" style="left:11px;top:951px;" width="18" height="18" viewBox="0 0 18 18"><circle cx="9" cy="9" r="6.800" fill="#e0e0e0"/><path d="M9 9V4M9 9L12.500 11.500" stroke="#2c2c2c" stroke-width="1.300" fill="none"/><path d="M9 9L3 5.500V12.500Z" fill="#2c2c2c"/></svg>
<svg class="a" style="left:29px;top:958px;" width="8" height="5.5" viewBox="0 0 8 5.5"><path d="M1.600 1.200L4.0 4.3L6.4 1.200" fill="none" stroke="#d0d0d0" stroke-width="1.4" stroke-linecap="round" stroke-linejoin="round"/></svg>
<div class="a" style="left:45.5px;top:950.5px;width:69px;height:19px;background:#2c2c2c;border-radius:4px 0 0 4px;border:1px solid #444;"></div>
<div class="a" style="left:114.5px;top:950.5px;width:59px;height:19px;background:#2c2c2c;border-radius:0 4px 4px 0;border:1px solid #444;border-left:none;"></div>
<div class="a t" style="left:53px;top:950.5px;height:19px;line-height:19px;font-size:11px;color:#e0e0e0;">Playback</div>
<svg class="a" style="left:104px;top:958px;" width="8" height="5.5" viewBox="0 0 8 5.5"><path d="M1.600 1.200L4.0 4.3L6.4 1.200" fill="none" stroke="#d0d0d0" stroke-width="1.4" stroke-linecap="round" stroke-linejoin="round"/></svg>
<div class="a t" style="left:122px;top:950.5px;height:19px;line-height:19px;font-size:11px;color:#e0e0e0;">Keying</div>
<svg class="a" style="left:163px;top:958px;" width="8" height="5.5" viewBox="0 0 8 5.5"><path d="M1.600 1.200L4.0 4.3L6.4 1.200" fill="none" stroke="#d0d0d0" stroke-width="1.4" stroke-linecap="round" stroke-linejoin="round"/></svg>
<div class="a t" style="left:181px;top:950.5px;height:19px;line-height:19px;font-size:11px;color:#e0e0e0;">View</div>
<div class="a t" style="left:221px;top:950.5px;height:19px;line-height:19px;font-size:11px;color:#e0e0e0;">Marker</div>
<div class="a" style="left:711px;top:951px;width:18px;height:18px;background:#545454;border-radius:4px;"></div>
<div class="a" style="left:716px;top:956px;width:8px;height:8px;background:#e6e6e6;border-radius:4px;"></div>
<div class="a" style="left:736.0px;top:951px;width:18.8px;height:18px;background:#545454;border-radius:4px 0 0 4px;"></div>
<div class="a" style="left:755.5px;top:951px;width:18.8px;height:18px;background:#545454;"></div>
<div class="a" style="left:775.5px;top:951px;width:18.8px;height:18px;background:#545454;"></div>
<div class="a" style="left:795.0px;top:951px;width:18.8px;height:18px;background:#545454;"></div>
<div class="a" style="left:814.5px;top:951px;width:18.8px;height:18px;background:#545454;"></div>
<div class="a" style="left:834.0px;top:951px;width:18.8px;height:18px;background:#545454;border-radius:0 4px 4px 0;"></div>
<svg class="a" style="left:736.0px;top:951px;" width="19" height="18" viewBox="0 0 19 18"><path d="M4.500 3.500V14.500" stroke="#e6e6e6" stroke-width="1.800"/><path d="M14 3.500V14.500L6.500 9Z" fill="#e6e6e6"/></svg>
<svg class="a" style="left:755.5px;top:951px;" width="19" height="18" viewBox="0 0 19 18"><path d="M6.500 4L11 9L6.500 14L2 9Z" fill="#e6e6e6"/><path d="M17 5V13L11.500 9Z" fill="#e6e6e6"/></svg>
<svg class="a" style="left:775.5px;top:951px;" width="19" height="18" viewBox="0 0 19 18"><path d="M14.500 2.800V15.200L4 9Z" fill="#e6e6e6"/></svg>
<svg class="a" style="left:795.0px;top:951px;" width="19" height="18" viewBox="0 0 19 18"><path d="M4.500 2.800V15.200L15 9Z" fill="#e6e6e6"/></svg>
<svg class="a" style="left:814.5px;top:951px;" width="19" height="18" viewBox="0 0 19 18"><path d="M12.500 4L17 9L12.500 14L8 9Z" fill="#e6e6e6"/><path d="M2 5V13L7.500 9Z" fill="#e6e6e6"/></svg>
<svg class="a" style="left:834.0px;top:951px;" width="19" height="18" viewBox="0 0 19 18"><path d="M14.500 3.500V14.500" stroke="#e6e6e6" stroke-width="1.800"/><path d="M5 3.500V14.500L12.500 9Z" fill="#e6e6e6"/></svg>
<div class="a" style="left:1296px;top:951px;width:73px;height:18px;background:#545454;border-radius:4px;"></div>
<div class="a t" style="left:1296px;top:951px;width:73px;height:18px;line-height:18px;font-size:11px;color:#e0e0e0;text-align:center;">1</div>
<div class="a" style="left:1376px;top:951px;width:18px;height:18px;background:#545454;border-radius:4px 0 0 4px;"></div>
<svg class="a" style="left:1376px;top:951px;" width="18" height="18" viewBox="0 0 18 18"><circle cx="9" cy="10" r="5.300" fill="none" stroke="#e0e0e0" stroke-width="1.200"/><path d="M9 6.500V10H11.500M7 2.500H11M13.500 4.500L15 3" stroke="#e0e0e0" stroke-width="1.200" fill="none"/></svg>
<div class="a" style="left:1395px;top:951px;width:87px;height:18px;background:#545454;"></div>
<div class="a t" style="left:1410px;top:951px;height:18px;line-height:18px;font-size:11px;color:#e0e0e0;">Start</div>
<div class="a t" style="right:451px;top:951px;height:18px;line-height:18px;font-size:11px;color:#e0e0e0;text-align:right;">1</div>
<div class="a" style="left:1483px;top:951px;width:83px;height:18px;background:#545454;border-radius:0 4px 4px 0;"></div>
<div class="a t" style="left:1498px;top:951px;height:18px;line-height:18px;font-size:11px;color:#e0e0e0;">End</div>
<div class="a t" style="right:367px;top:951px;height:18px;line-height:18px;font-size:11px;color:#e0e0e0;text-align:right;letter-spacing:0.5px;">250</div>
<div class="a t" style="left:90.4px;top:974px;width:40px;height:20px;line-height:20px;font-size:11px;color:#b8b8b8;text-align:center;letter-spacing:0.5px;">10</div>
<div class="a t" style="left:149.4px;top:974px;width:40px;height:20px;line-height:20px;font-size:11px;color:#b8b8b8;text-align:center;letter-spacing:0.5px;">20</div>
<div class="a t" style="left:208.4px;top:974px;width:40px;height:20px;line-height:20px;font-size:11px;color:#b8b8b8;text-align:center;letter-spacing:0.5px;">30</div>
<div class="a t" style="left:267.4px;top:974px;width:40px;height:20px;line-height:20px;font-size:11px;color:#b8b8b8;text-align:center;letter-spacing:0.5px;">40</div>
<div class="a t" style="left:326.4px;top:974px;width:40px;height:20px;line-height:20px;font-size:11px;color:#b8b8b8;text-align:center;letter-spacing:0.5px;">50</div>
<div class="a t" style="left:385.4px;top:974px;width:40px;height:20px;line-height:20px;font-size:11px;color:#b8b8b8;text-align:center;letter-spacing:0.5px;">60</div>
<div class="a t" style="left:444.4px;top:974px;width:40px;height:20px;line-height:20px;font-size:11px;color:#b8b8b8;text-align:center;letter-spacing:0.5px;">70</div>
<div class="a t" style="left:503.4px;top:974px;width:40px;height:20px;line-height:20px;font-size:11px;color:#b8b8b8;text-align:center;letter-spacing:0.5px;">80</div>
<div class="a t" style="left:562.4px;top:974px;width:40px;height:20px;line-height:20px;font-size:11px;color:#b8b8b8;text-align:center;letter-spacing:0.5px;">90</div>
<div class="a t" style="left:621.4px;top:974px;width:40px;height:20px;line-height:20px;font-size:11px;color:#b8b8b8;text-align:center;letter-spacing:0.5px;">100</div>
<div class="a t" style="left:680.4px;top:974px;width:40px;height:20px;line-height:20px;font-size:11px;color:#b8b8b8;text-align:center;letter-spacing:0.5px;">110</div>
<div class="a t" style="left:739.4px;top:974px;width:40px;height:20px;line-height:20px;font-size:11px;color:#b8b8b8;text-align:center;letter-spacing:0.5px;">120</div>
<div class="a t" style="left:798.4px;top:974px;width:40px;height:20px;line-height:20px;font-size:11px;color:#b8b8b8;text-align:center;letter-spacing:0.5px;">130</div>
<div class="a t" style="left:857.4px;top:974px;width:40px;height:20px;line-height:20px;font-size:11px;color:#b8b8b8;text-align:center;letter-spacing:0.5px;">140</div>
<div class="a t" style="left:916.4px;top:974px;width:40px;height:20px;line-height:20px;font-size:11px;color:#b8b8b8;text-align:center;letter-spacing:0.5px;">150</div>
<div class="a t" style="left:975.4px;top:974px;width:40px;height:20px;line-height:20px;font-size:11px;color:#b8b8b8;text-align:center;letter-spacing:0.5px;">160</div>
<div class="a t" style="left:1034.4px;top:974px;width:40px;height:20px;line-height:20px;font-size:11px;color:#b8b8b8;text-align:center;letter-spacing:0.5px;">170</div>
<div class="a t" style="left:1093.4px;top:974px;width:40px;height:20px;line-height:20px;font-size:11px;color:#b8b8b8;text-align:center;letter-spacing:0.5px;">180</div>
<div class="a t" style="left:1152.4px;top:974px;width:40px;height:20px;line-height:20px;font-size:11px;color:#b8b8b8;text-align:center;letter-spacing:0.5px;">190</div>
<div class="a t" style="left:1211.4px;top:974px;width:40px;height:20px;line-height:20px;font-size:11px;color:#b8b8b8;text-align:center;letter-spacing:0.5px;">200</div>
<div class="a t" style="left:1270.4px;top:974px;width:40px;height:20px;line-height:20px;font-size:11px;color:#b8b8b8;text-align:center;letter-spacing:0.5px;">210</div>
<div class="a t" style="left:1329.4px;top:974px;width:40px;height:20px;line-height:20px;font-size:11px;color:#b8b8b8;text-align:center;letter-spacing:0.5px;">220</div>
<div class="a t" style="left:1388.4px;top:974px;width:40px;height:20px;line-height:20px;font-size:11px;color:#b8b8b8;text-align:center;letter-spacing:0.5px;">230</div>
<div class="a t" style="left:1447.4px;top:974px;width:40px;height:20px;line-height:20px;font-size:11px;color:#b8b8b8;text-align:center;letter-spacing:0.5px;">240</div>
<div class="a t" style="left:1506.4px;top:974px;width:40px;height:20px;line-height:20px;font-size:11px;color:#b8b8b8;text-align:center;letter-spacing:0.5px;">250</div>
<div class="a" style="left:58px;top:992px;width:1.5px;height:27.5px;background:#4f77b8;"></div>
<div class="a" style="left:45.5px;top:974.5px;width:26px;height:18px;background:#4f77b8;border-radius:4px;"></div>
<div class="a t" style="left:45.5px;top:974.5px;width:26px;height:18px;line-height:18px;font-size:11px;color:#fff;text-align:center;">1</div>
<div class="a" style="left:9px;top:1008.5px;width:1567px;height:9px;background:#676767;border-radius:4.5px;"></div>
<div class="a" style="left:9.5px;top:1009.5px;width:7px;height:7px;background:#555;border-radius:3.5px;border:1px solid #7a7a7a;"></div>
<div class="a" style="left:1568.5px;top:1009.5px;width:7px;height:7px;background:#555;border-radius:3.5px;border:1px solid #7a7a7a;"></div>
<svg class="a" style="left:0px;top:984px;" width="10" height="20" viewBox="0 0 10 20"><path d="M2 5.500L5.500 10L2 14.500" fill="none" stroke="#aaa" stroke-width="1.200"/></svg>
<div class="a" style="left:1577px;top:984px;width:9px;height:20px;background:#252525;border-radius:4px 0 0 4px;"></div>
<svg class="a" style="left:1577px;top:984px;" width="9" height="20" viewBox="0 0 9 20"><path d="M6 5.500L3 10L6 14.500" fill="none" stroke="#aaa" stroke-width="1.200"/></svg>
<div class="a" style="left:0px;top:1020px;width:1920px;height:20px;background:#2e2e2e;"></div>
<svg class="a" style="left:11px;top:1022px;" width="18" height="17" viewBox="0 0 18 17"><rect x="1.500" y="1.500" width="10" height="14" rx="3.500" fill="none" stroke="#d0d0d0" stroke-width="1.200"/><path d="M1.500 7H6.500V1.500H5A3.500 3.500 0 0 0 1.500 5Z" fill="#d0d0d0"/></svg>
<div class="a t" style="left:34px;top:1020px;height:20px;line-height:20px;font-size:11px;color:#c8c8c8;">Select</div>
<svg class="a" style="left:75px;top:1022px;" width="18" height="17" viewBox="0 0 18 17"><rect x="1.500" y="1.500" width="10" height="14" rx="3.500" fill="none" stroke="#d0d0d0" stroke-width="1.200"/><path d="M1.500 7H6.500V1.500H5A3.500 3.500 0 0 0 1.500 5Z" fill="#d0d0d0"/><path d="M14 1.500V8M16.500 3V7" stroke="#d0d0d0" stroke-width="1.100"/></svg>
<div class="a t" style="left:100px;top:1020px;height:20px;line-height:20px;font-size:11px;color:#c8c8c8;">Box Select</div>
<svg class="a" style="left:247px;top:1022px;" width="18" height="17" viewBox="0 0 18 17"><rect x="1.500" y="1.500" width="10" height="14" rx="3.500" fill="none" stroke="#d0d0d0" stroke-width="1.200"/><rect x="5.200" y="3" width="2.600" height="5" rx="1.200" fill="#d0d0d0"/></svg>
<div class="a t" style="left:270px;top:1020px;height:20px;line-height:20px;font-size:11px;color:#c8c8c8;">Rotate View</div>
<svg class="a" style="left:483px;top:1022px;" width="18" height="17" viewBox="0 0 18 17"><rect x="1.500" y="1.500" width="10" height="14" rx="3.500" fill="none" stroke="#d0d0d0" stroke-width="1.200"/><path d="M11.500 7H6.500V1.500H8A3.500 3.500 0 0 1 11.500 5Z" fill="#d0d0d0"/></svg>
<div class="a t" style="left:506px;top:1020px;height:20px;line-height:20px;font-size:11px;color:#c8c8c8;">Object Context Menu</div>
<div class="a t" style="right:34px;top:1020px;height:20px;line-height:20px;font-size:11px;color:#c8c8c8;text-align:right;letter-spacing:0.13px;">Collection | Cube | Verts:8 | Faces:6 | Tris:12 | Objects:1/3 | Mem: 15.3 MiB | 2.83.3</div>
<div class="a" style="left:0px;top:1040px;width:1920px;height:40px;background:#90a8c6;background:linear-gradient(90deg,#8fa7c5 0%,#93abc9 30%,#8ea6c4 55%,#92aac8 80%,#8fa7c5 100%);"></div>
<div class="a" style="left:525px;top:1040px;width:48px;height:40px;background:#a9bdd5;"></div>
<div class="a" style="left:88px;top:1078px;width:39.5px;height:2px;background:#76b9ed;"></div>
<div class="a" style="left:137px;top:1078px;width:40px;height:2px;background:#76b9ed;"></div>
<div class="a" style="left:186px;top:1078px;width:40px;height:2px;background:#76b9ed;"></div>
<div class="a" style="left:480px;top:1078px;width:40px;height:2px;background:#76b9ed;"></div>
<div class="a" style="left:525px;top:1078px;width:48px;height:2px;background:#76b9ed;"></div>
<div class="a" style="left:578px;top:1078px;width:40px;height:2px;background:#76b9ed;"></div>
<div class="a" style="left:119px;top:1078px;width:1.5px;height:2px;background:#5a86ad;"></div>
<svg class="a" style="left:15px;top:1028px;" width="50" height="50" viewBox="0 0 50 50"><defs><radialGradient id="og" cx="50%" cy="38%" r="62%"><stop offset="0" stop-color="#6fb2e8"/><stop offset=".55" stop-color="#2a6fb5"/><stop offset=".85" stop-color="#134a86"/><stop offset="1" stop-color="#0c2f5c"/></radialGradient>
<radialGradient id="og2" cx="50%" cy="100%" r="60%"><stop offset="0" stop-color="#3fe0ff" stop-opacity=".95"/><stop offset="1" stop-color="#3fe0ff" stop-opacity="0"/></radialGradient>
<linearGradient id="ogl" x1="0" y1="0" x2="0" y2="1"><stop offset="0" stop-color="#fff" stop-opacity=".55"/><stop offset="1" stop-color="#fff" stop-opacity=".05"/></linearGradient></defs>
<circle cx="25" cy="25" r="24.500" fill="#1b4f86"/><circle cx="25" cy="25" r="23.500" fill="url(#og)"/><circle cx="25" cy="25" r="23.500" fill="url(#og2)"/>
<path d="M5 20A21 21 0 0 1 45 20C35 26 15 26 5 20Z" fill="url(#ogl)"/>
<g transform="translate(24.5 25) scale(1.38) translate(-23.2 -24.5)"><path d="M15.500 13.500C18.500 11.800 21.500 12 24 13.500L22 23C19.500 21.500 16.500 21.500 13.500 23Z" fill="#f0582a"/>
<path d="M26 14.500C28.500 16 31.500 16 34.500 14.200L32.500 23.800C29.500 25.500 26.500 25.500 24 24Z" fill="#7fbf3a"/>
<path d="M13 25C16 23.500 19 23.500 21.500 25L19.500 34.500C17 33 14 33 11 34.500Z" fill="#3b9be8"/>
<path d="M23.500 26C26 27.500 29 27.500 32 25.800L30 35.300C27 37 24 37 21.500 35.500Z" fill="#fcc32c"/></g></svg>
<svg class="a" style="left:96px;top:1048px;" width="24" height="24" viewBox="0 0 24 24"><path d="M1 3H8L10 5.500H22V8H1Z" fill="#e9a52b"/><path d="M1 6.500H22.500V20.500H1Z" fill="#fcd354"/><path d="M1 6.500H22.500V9H1Z" fill="#fde08a"/><path d="M6 13.500H17.500V20.500H14.500V16.500H9V20.500H6Z" fill="#2f8fe0"/></svg>
<svg class="a" style="left:145px;top:1048px;" width="24" height="24" viewBox="0 0 24 24"><circle cx="12" cy="12" r="11.300" fill="#e8453c"/><path d="M12 12L2.200 6.400A11.300 11.300 0 0 0 8 22.600L12.500 14Z" fill="#2da94f"/><path d="M12 12L8 22.600A11.300 11.300 0 0 0 23.300 12L17 9Z" fill="#fcc934"/><path d="M12 7H22.100A11.300 11.300 0 0 1 23.300 12H12Z" fill="#e8453c"/><circle cx="12" cy="12" r="5.200" fill="#fff"/><circle cx="12" cy="12" r="4.100" fill="#4688f1"/></svg>
<svg class="a" style="left:194px;top:1048px;" width="24" height="24" viewBox="0 0 24 24"><defs><linearGradient id="stg" x1="0" y1="0" x2="0" y2="1"><stop offset="0" stop-color="#111d2e"/><stop offset="1" stop-color="#1c6ca8"/></linearGradient></defs><circle cx="12" cy="12" r="11.500" fill="url(#stg)"/><circle cx="16" cy="8.500" r="3.600" fill="none" stroke="#fff" stroke-width="1.600"/><circle cx="16" cy="8.500" r="1.500" fill="#fff"/><path d="M.8 13L8 16L12.500 11L14 13L10 17.500A3 3 0 0 1 4.500 18.500L1.500 17Z" fill="#fff"/><circle cx="7.500" cy="17" r="2" fill="#1c6ca8" stroke="#fff" stroke-width=".8"/></svg>
<svg class="a" style="left:244px;top:1048px;" width="22" height="24" viewBox="0 0 22 24"><path d="M1 1.500A1.500 1.500 0 0 1 2.500 0H19.500A1.500 1.500 0 0 1 21 1.500V19L11 24L1 19Z" fill="#111"/><path d="M4 4H7.500V5.500H5.700V8.500H7.300V10H5.700V13H7.500V14.500H4Z M8.500 4H11A1.500 1.500 0 0 1 12.500 5.500V9A1.500 1.500 0 0 1 11 10.500H10.200V14.500H8.500Z M13.500 4H15.200V14.500H13.500Z M16 5.500A1.500 1.500 0 0 1 19 5.500V7.500H17.500V5.500H17.500V13H17.500V11H19V13A1.500 1.500 0 0 1 16 13Z" fill="#fff"/><path d="M4 16.500H18V18H4Z" fill="#ddd"/><path d="M7 20.500H15L11 22.300Z" fill="#fff"/></svg>
<svg class="a" style="left:292px;top:1047px;" width="24" height="26" viewBox="0 0 24 26"><path d="M13 1C11 3 11.500 4.500 13 6A7.500 7.500 0 0 1 19.500 15C19 19 16 23 11.500 25C13.500 23 13 21.500 11.500 20A7.500 7.500 0 0 1 5 11C5.500 7 8.500 3 13 1Z" fill="#f05a22"/><circle cx="12.200" cy="13" r="3" fill="#90a8c6"/></svg>
<svg class="a" style="left:341px;top:1048px;" width="24" height="24" viewBox="0 0 24 24"><circle cx="12" cy="12" r="11.500" fill="#0c84f7"/><path d="M4.500 15A8 8 0 1 1 12 20.500A5.500 5.500 0 1 1 17 12.500A3.200 3.200 0 1 1 12 10" fill="none" stroke="#fff" stroke-width="2.100" stroke-linecap="round"/></svg>
<svg class="a" style="left:390px;top:1048px;" width="22" height="24" viewBox="0 0 22 24"><rect x=".5" y=".5" width="18" height="22" fill="#f4f4f4" stroke="#999" stroke-width=".6"/><rect x="2" y="2" width="15" height="15" fill="#3a6fd0"/><path d="M2 12C7 8 11 9 17 6V17H2Z" fill="#e8eef7"/><path d="M2 14H17V17H2Z" fill="#1c3f8a"/><path d="M6 19L19 7L21 8.500L8 20.500Z" fill="#c8202c"/><path d="M4 21.500L6 19L8 20.500Z" fill="#eee"/></svg>
<svg class="a" style="left:439px;top:1048px;" width="24" height="24" viewBox="0 0 24 24"><rect width="24" height="24" fill="#2e5f7c"/><rect x=".5" y=".5" width="23" height="23" fill="none" stroke="#3f7f9f" stroke-width="1"/><path d="M4 17C4 10 8 5 14 5C18 5 20 8 19 11C21 13 20 17 17 18M8 18C8 14 10 12 13 12" fill="none" stroke="#4a8fb0" stroke-width="1.600"/></svg>
<svg class="a" style="left:490px;top:1049px;" width="21" height="23" viewBox="0 0 21 23"><path d="M2.500 0H17A2.500 2.500 0 0 1 19.500 2.500V22.500L15.500 19H2.500A2.500 2.500 0 0 1 0 16.500V2.500A2.500 2.500 0 0 1 2.500 0Z" fill="#7289da"/><path d="M5.500 6.500C8 5.300 11.500 5.300 14 6.500C15.500 9 16 11.500 16 13.500C14.500 14.500 13.500 15 12.500 15L12 14C11 14.300 8.500 14.300 7.500 14L7 15C6 15 5 14.500 3.500 13.500C3.500 11.500 4 9 5.500 6.500Z" fill="#fff"/><ellipse cx="7.500" cy="11" rx="1.300" ry="1.500" fill="#7289da"/><ellipse cx="12" cy="11" rx="1.300" ry="1.500" fill="#7289da"/></svg>
<svg class="a" style="left:536px;top:1047px;" width="25" height="25" viewBox="0 0 16 16"><g fill="none" stroke="#e87d0d" stroke-linecap="round">
<path d="M1.2 11.2L8.2 5.6" stroke-width="2.1"/>
<path d="M3.2 5.7H8.6" stroke-width="1.7"/>
<path d="M6.2 2.6L9.4 5.4" stroke-width="1.7"/>
</g>
<ellipse cx="9.6" cy="9.1" rx="5.2" ry="4.6" fill="#e87d0d"/>
<ellipse cx="9.7" cy="9.1" rx="3.0" ry="2.7" fill="#fff"/>
<ellipse cx="9.8" cy="9.1" rx="1.6" ry="1.5" fill="#265787"/></svg>
<svg class="a" style="left:586px;top:1047px;" width="24" height="26" viewBox="0 0 24 26"><path d="M1.500 2H15L18.500 5.500V24H1.500Z" fill="#f8f8f8" stroke="#888" stroke-width=".6"/><path d="M1.500 14H18.500V24H1.500Z" fill="#7fd13b"/><path d="M1.500 19H18.500V24H1.500Z" fill="#5cb82a"/><path d="M5.500 7V14M7.500 7V14M5.500 7H7.500M10 11H14" stroke="#222" stroke-width="1" fill="none"/><path d="M19.500 2L22 3.500L15.500 19L13.500 21L13.500 18Z" fill="#f2b632"/><path d="M19.500 2L22 3.500L21.300 5L19 3.500Z" fill="#d8342c"/></svg>
<svg class="a" style="left:1736px;top:1054px;" width="14" height="10" viewBox="0 0 14 10"><path d="M1.500 8L7 2.500L12.500 8" fill="none" stroke="#fff" stroke-width="1.300"/></svg>
<svg class="a" style="left:1758px;top:1051px;" width="18" height="18" viewBox="0 0 18 18"><rect x="3.500" y="3.500" width="12" height="8.500" fill="none" stroke="#fff" stroke-width="1.200"/><path d="M6 15.500H13M9.500 12V15.500M.5 3H3.500M2 3V8" stroke="#fff" stroke-width="1.200" fill="none"/></svg>
<svg class="a" style="left:1781px;top:1051px;" width="20" height="18" viewBox="0 0 20 18"><path d="M2 6.500H5L9 2.500V15.500L5 11.500H2Z" fill="none" stroke="#fff" stroke-width="1.200" stroke-linejoin="round"/><path d="M11.500 6.500A3.500 3.500 0 0 1 11.500 11.500" fill="none" stroke="#fff" stroke-width="1.100"/><path d="M13.500 4.500A6 6 0 0 1 13.500 13.500" fill="none" stroke="#c8d4e4" stroke-width="1"/><path d="M15.500 2.500A8.500 8.500 0 0 1 15.500 15.500" fill="none" stroke="#a8b8d0" stroke-width="1"/></svg>
<div class="a t" style="left:1805px;top:1042.5px;width:60px;height:17px;line-height:17px;font-size:12.5px;color:#fff;text-align:center;transform:scaleX(.885);">12:39 PM</div>
<div class="a t" style="left:1805px;top:1060.5px;width:60px;height:17px;line-height:17px;font-size:12.5px;color:#fff;text-align:center;transform:scaleX(.95);">8/5/2020</div>
<svg class="a" style="left:1878px;top:1051px;" width="18" height="18" viewBox="0 0 18 18"><path d="M1.500 1.500H16.500V12.500H11L9 15.500L7 12.500H1.500Z" fill="none" stroke="#fff" stroke-width="1.200" stroke-linejoin="round"/></svg>
<div class="a" style="left:1915px;top:1040px;width:1px;height:40px;background:#c5d0de;"></div>
<div class="a" style="left:62px;top:45.5px;width:189px;height:291px;background:rgba(31,31,31,.95);border-radius:0 0 4px 4px;box-shadow:0 2px 6px rgba(0,0,0,.45);"></div>
<div class="a t" style="left:91px;top:48.5px;height:20px;line-height:20px;font-size:11px;color:#7c7c7c;text-shadow:0 1px 1px rgba(0,0,0,.6);"><span style="text-decoration:underline;text-underline-offset:2px">U</span>ndo</div>
<div class="a t" style="right:1673.5px;top:48.5px;height:20px;line-height:20px;font-size:11px;color:#707070;text-align:right;">Ctrl Z</div>
<div class="a t" style="left:91px;top:68.5px;height:20px;line-height:20px;font-size:11px;color:#7c7c7c;text-shadow:0 1px 1px rgba(0,0,0,.6);"><span style="text-decoration:underline;text-underline-offset:2px">R</span>edo</div>
<div class="a t" style="right:1673.5px;top:68.5px;height:20px;line-height:20px;font-size:11px;color:#707070;text-align:right;">Shift Ctrl Z</div>
<div class="a" style="left:62px;top:94.5px;width:189px;height:1px;background:#353535;"></div>
<div class="a t" style="left:91px;top:97.5px;height:20px;line-height:20px;font-size:11px;color:#7c7c7c;text-shadow:0 1px 1px rgba(0,0,0,.6);">Undo <span style="text-decoration:underline;text-underline-offset:2px">H</span>istory...</div>
<div class="a" style="left:62px;top:123px;width:189px;height:1px;background:#353535;"></div>
<div class="a t" style="left:91px;top:126.5px;height:20px;line-height:20px;font-size:11px;color:#7c7c7c;text-shadow:0 1px 1px rgba(0,0,0,.6);">Repeat <span style="text-decoration:underline;text-underline-offset:2px">L</span>ast</div>
<div class="a t" style="right:1673.5px;top:126.5px;height:20px;line-height:20px;font-size:11px;color:#707070;text-align:right;">Shift R</div>
<div class="a t" style="left:91px;top:146.5px;height:20px;line-height:20px;font-size:11px;color:#7c7c7c;text-shadow:0 1px 1px rgba(0,0,0,.6);">Re<span style="text-decoration:underline;text-underline-offset:2px">p</span>eat History...</div>
<div class="a" style="left:62px;top:172px;width:189px;height:1px;background:#353535;"></div>
<div class="a t" style="left:91px;top:175.5px;height:20px;line-height:20px;font-size:11px;color:#7c7c7c;letter-spacing:0.07px;text-shadow:0 1px 1px rgba(0,0,0,.6);"><span style="text-decoration:underline;text-underline-offset:2px">A</span>djust Last Operation...</div>
<div class="a t" style="right:1673.5px;top:175.5px;height:20px;line-height:20px;font-size:11px;color:#707070;text-align:right;">F9</div>
<div class="a" style="left:62px;top:201px;width:189px;height:1px;background:#353535;"></div>
<div class="a t" style="left:91px;top:204.5px;height:20px;line-height:20px;font-size:11px;color:#e6e6e6;text-shadow:0 1px 1px rgba(0,0,0,.6);"><span style="text-decoration:underline;text-underline-offset:2px">O</span>perator Search...</div>
<div class="a t" style="right:1673.5px;top:204.5px;height:20px;line-height:20px;font-size:11px;color:#b0b0b0;text-align:right;">F3</div>
<svg class="a" style="left:69px;top:207px;" width="16" height="16" viewBox="0 0 16 16"><circle cx="9.500" cy="6.500" r="4.300" fill="none" stroke="#e0e0e0" stroke-width="1.200"/><path d="M6.500 9.500L1.500 15" stroke="#e0e0e0" stroke-width="1.200"/></svg>
<div class="a" style="left:62px;top:230px;width:189px;height:1px;background:#353535;"></div>
<div class="a t" style="left:91px;top:233.5px;height:20px;line-height:20px;font-size:11px;color:#e6e6e6;letter-spacing:0.15px;text-shadow:0 1px 1px rgba(0,0,0,.6);">Rename Active <span style="text-decoration:underline;text-underline-offset:2px">I</span>tem...</div>
<div class="a t" style="right:1673.5px;top:233.5px;height:20px;line-height:20px;font-size:11px;color:#b0b0b0;text-align:right;">F2</div>
<div class="a t" style="left:91px;top:253.5px;height:20px;line-height:20px;font-size:11px;color:#e6e6e6;text-shadow:0 1px 1px rgba(0,0,0,.6);"><span style="text-decoration:underline;text-underline-offset:2px">B</span>atch Rename</div>
<div class="a t" style="right:1673.5px;top:253.5px;height:20px;line-height:20px;font-size:11px;color:#b0b0b0;text-align:right;">Ctrl F2</div>
<div class="a" style="left:62px;top:279.5px;width:189px;height:1px;background:#353535;"></div>
<div class="a t" style="left:91px;top:282.5px;height:20px;line-height:20px;font-size:11px;color:#e6e6e6;text-shadow:0 1px 1px rgba(0,0,0,.6);">Lock Object Modes</div>
<div class="a" style="left:72px;top:288px;width:10px;height:10px;background:#e6e6e6;border-radius:1.5px;"></div>
<svg class="a" style="left:72px;top:288px;" width="10" height="10" viewBox="0 0 10 10"><path d="M2 5L4.200 7.500L8.500 2.200" fill="none" stroke="#1a1a1a" stroke-width="1.500"/></svg>
<div class="a" style="left:62px;top:308px;width:189px;height:1px;background:#353535;"></div>
<div class="a" style="left:62px;top:313px;width:189px;height:18px;background:#4f77b8;"></div>
<div class="a t" style="left:91px;top:311.5px;height:20px;line-height:20px;font-size:11px;color:#fff;letter-spacing:-0.12px;text-shadow:0 1px 1px rgba(0,0,0,.6);"><span style="text-decoration:underline;text-underline-offset:2px">P</span>references...</div>
<svg class="a" style="left:69px;top:314px;" width="16" height="16" viewBox="0 0 16 16"><rect x="6.900" y=".8" width="2.200" height="3.200" transform="rotate(0 8 8)" fill="#fff"/><rect x="6.900" y=".8" width="2.200" height="3.200" transform="rotate(45 8 8)" fill="#fff"/><rect x="6.900" y=".8" width="2.200" height="3.200" transform="rotate(90 8 8)" fill="#fff"/><rect x="6.900" y=".8" width="2.200" height="3.200" transform="rotate(135 8 8)" fill="#fff"/><rect x="6.900" y=".8" width="2.200" height="3.200" transform="rotate(180 8 8)" fill="#fff"/><rect x="6.900" y=".8" width="2.200" height="3.200" transform="rotate(225 8 8)" fill="#fff"/><rect x="6.900" y=".8" width="2.200" height="3.200" transform="rotate(270 8 8)" fill="#fff"/><rect x="6.900" y=".8" width="2.200" height="3.200" transform="rotate(315 8 8)" fill="#fff"/><circle cx="8" cy="8" r="5" fill="#fff"/><circle cx="8" cy="8" r="2.100" fill="#4f77b8"/></svg>
<div class="a" style="left:129.5px;top:343.5px;width:236px;height:34.5px;background:#1b1b1c;border-radius:4px;box-shadow:0 1px 4px rgba(0,0,0,.5);"></div>
<div class="a t" style="left:142.5px;top:352px;height:20px;line-height:20px;font-size:11px;color:#e8e8e8;">Edit user preferences and system settings.</div>
<div class="a" style="left:54px;top:14px;width:325px;height:381px;border:8px solid #fe0000;"></div>
</div></body></html>
